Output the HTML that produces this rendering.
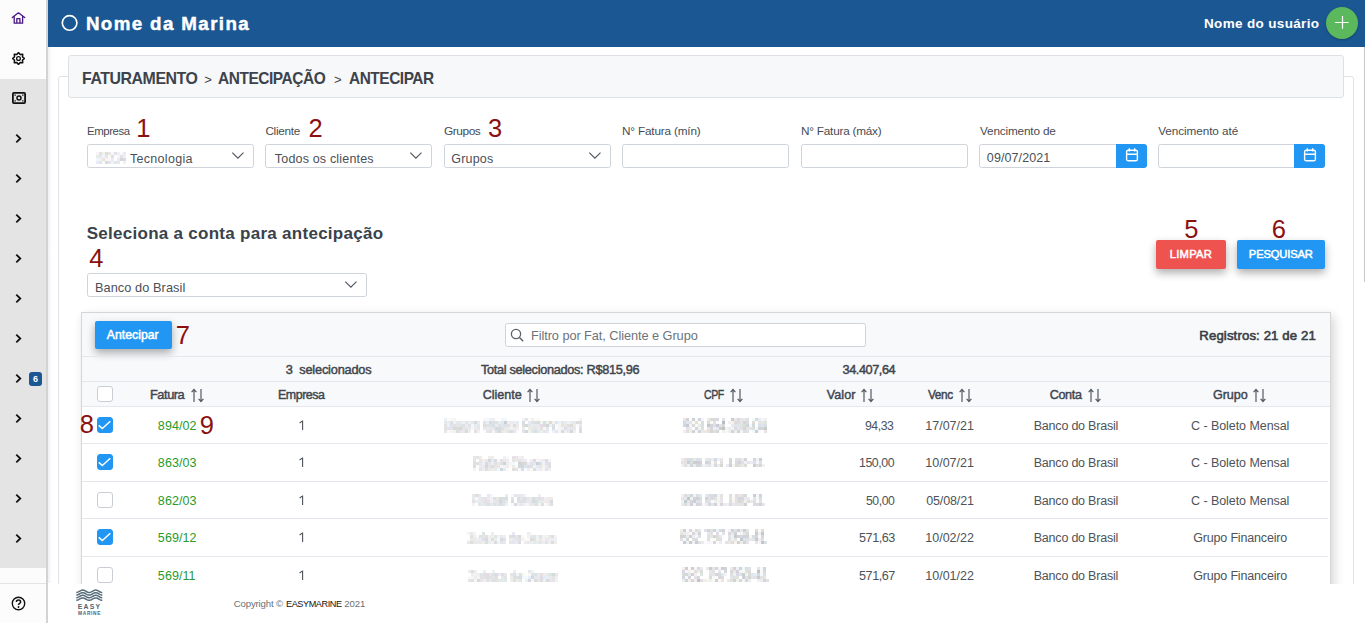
<!DOCTYPE html><html><head><meta charset="utf-8"><style>
*{box-sizing:border-box;margin:0;padding:0}
html,body{width:1365px;height:623px;overflow:hidden;background:#fff;font-family:"Liberation Sans",sans-serif;color:#333}
.a{position:absolute;white-space:nowrap}
.bl{display:inline-block;width:0;height:0}
.num{color:#8b1111}
.inp{position:absolute;height:24px;border:1px solid #ced4da;border-radius:2.5px;background:#fff}
.cal{position:absolute;background:#2196f3;border-radius:0 3px 3px 0}
.cb{position:absolute;width:16px;height:16px;border:1px solid #c9ced4;border-radius:3px;background:#fff}
.cbon{background:#2196f3;border-color:#2196f3}
.rl{position:absolute;height:1px;background:#e4e7eb}
.sb{-webkit-text-stroke:0.25px currentColor}
</style></head><body>
<div class="a" style="left:0;top:0;width:46px;height:623px;background:#fcfcfc"></div>
<div class="a" style="left:0;top:79px;width:46px;height:489px;background:#e4e4e4"></div>
<div class="a" style="left:46px;top:0;width:2px;height:623px;background:#d3d3d3"></div>
<div class="a" style="left:0;top:583px;width:46px;height:1px;background:#e4e4e4"></div>
<svg class="a" style="left:11px;top:11px" width="16" height="14" viewBox="0 0 16 14"><path d="M1.3 6.6 L7.4 1.8 L13.7 6.6 M3.2 5.4 V12.2 H11.6 V5.4 M5.8 12.2 V7.6 H8.9 V12.2" fill="none" stroke="#4a1688" stroke-width="1.3" stroke-linejoin="round" stroke-linecap="round"/></svg>
<svg class="a" style="left:12px;top:52px" width="13" height="13" viewBox="0 0 13 13"><path d="M6.50 0.50 L8.15 2.53 L10.74 2.26 L10.47 4.85 L12.50 6.50 L10.47 8.15 L10.74 10.74 L8.15 10.47 L6.50 12.50 L4.85 10.47 L2.26 10.74 L2.53 8.15 L0.50 6.50 L2.53 4.85 L2.26 2.26 L4.85 2.53 Z" fill="none" stroke="#111" stroke-width="1.5" stroke-linejoin="round"/><circle cx="6.5" cy="6.5" r="1.9" fill="none" stroke="#111" stroke-width="1.3"/></svg>
<svg class="a" style="left:12px;top:92px" width="14" height="12" viewBox="0 0 14 12"><rect x="0.9" y="0.9" width="12.2" height="10.2" rx="1" fill="none" stroke="#111" stroke-width="1.8"/><circle cx="7" cy="6" r="2" fill="none" stroke="#111" stroke-width="1.5"/><rect x="2.5" y="2.5" width="1.3" height="1.3" fill="#111"/><rect x="10.2" y="2.5" width="1.3" height="1.3" fill="#111"/><rect x="2.5" y="8.2" width="1.3" height="1.3" fill="#111"/><rect x="10.2" y="8.2" width="1.3" height="1.3" fill="#111"/></svg>
<svg class="a" style="left:14px;top:133px" width="9" height="11" viewBox="0 0 9 11"><path d="M2.3 1.6 L6.3 5.5 L2.3 9.4" fill="none" stroke="#111" stroke-width="1.8" stroke-linecap="butt" stroke-linejoin="miter"/></svg>
<svg class="a" style="left:14px;top:173px" width="9" height="11" viewBox="0 0 9 11"><path d="M2.3 1.6 L6.3 5.5 L2.3 9.4" fill="none" stroke="#111" stroke-width="1.8" stroke-linecap="butt" stroke-linejoin="miter"/></svg>
<svg class="a" style="left:14px;top:213px" width="9" height="11" viewBox="0 0 9 11"><path d="M2.3 1.6 L6.3 5.5 L2.3 9.4" fill="none" stroke="#111" stroke-width="1.8" stroke-linecap="butt" stroke-linejoin="miter"/></svg>
<svg class="a" style="left:14px;top:253px" width="9" height="11" viewBox="0 0 9 11"><path d="M2.3 1.6 L6.3 5.5 L2.3 9.4" fill="none" stroke="#111" stroke-width="1.8" stroke-linecap="butt" stroke-linejoin="miter"/></svg>
<svg class="a" style="left:14px;top:293px" width="9" height="11" viewBox="0 0 9 11"><path d="M2.3 1.6 L6.3 5.5 L2.3 9.4" fill="none" stroke="#111" stroke-width="1.8" stroke-linecap="butt" stroke-linejoin="miter"/></svg>
<svg class="a" style="left:14px;top:333px" width="9" height="11" viewBox="0 0 9 11"><path d="M2.3 1.6 L6.3 5.5 L2.3 9.4" fill="none" stroke="#111" stroke-width="1.8" stroke-linecap="butt" stroke-linejoin="miter"/></svg>
<svg class="a" style="left:14px;top:373px" width="9" height="11" viewBox="0 0 9 11"><path d="M2.3 1.6 L6.3 5.5 L2.3 9.4" fill="none" stroke="#111" stroke-width="1.8" stroke-linecap="butt" stroke-linejoin="miter"/></svg>
<svg class="a" style="left:14px;top:413px" width="9" height="11" viewBox="0 0 9 11"><path d="M2.3 1.6 L6.3 5.5 L2.3 9.4" fill="none" stroke="#111" stroke-width="1.8" stroke-linecap="butt" stroke-linejoin="miter"/></svg>
<svg class="a" style="left:14px;top:453px" width="9" height="11" viewBox="0 0 9 11"><path d="M2.3 1.6 L6.3 5.5 L2.3 9.4" fill="none" stroke="#111" stroke-width="1.8" stroke-linecap="butt" stroke-linejoin="miter"/></svg>
<svg class="a" style="left:14px;top:493px" width="9" height="11" viewBox="0 0 9 11"><path d="M2.3 1.6 L6.3 5.5 L2.3 9.4" fill="none" stroke="#111" stroke-width="1.8" stroke-linecap="butt" stroke-linejoin="miter"/></svg>
<svg class="a" style="left:14px;top:533px" width="9" height="11" viewBox="0 0 9 11"><path d="M2.3 1.6 L6.3 5.5 L2.3 9.4" fill="none" stroke="#111" stroke-width="1.8" stroke-linecap="butt" stroke-linejoin="miter"/></svg>
<div class="a" style="left:29px;top:372px;width:13px;height:14px;background:#1b5893;border-radius:3px;color:#fff;font-size:9px;font-weight:bold;text-align:center;line-height:14px">6</div>
<svg class="a" style="left:11px;top:596px" width="15" height="15" viewBox="0 0 15 15"><circle cx="7.5" cy="7.5" r="6.2" fill="none" stroke="#111" stroke-width="1.4"/><path d="M5.4 5.9 C5.4 3.3 9.6 3.3 9.6 5.9 C9.6 7.4 7.5 7.4 7.5 9" fill="none" stroke="#111" stroke-width="1.5"/><circle cx="7.5" cy="11" r="0.9" fill="#111"/></svg>
<div class="a" style="left:48px;top:0;width:1317px;height:47px;background:#1b5893"></div>
<svg class="a" style="left:60px;top:14px" width="20" height="20" viewBox="0 0 20 20"><circle cx="9.6" cy="8.9" r="7.3" fill="none" stroke="#fff" stroke-width="1.6"/></svg>
<div class="a" id="t_marina" style="left:85.88px;top:15.00px;font-size:18.75px;line-height:18.75px;letter-spacing:1.385px;font-weight:bold;color:#fff;-webkit-text-stroke:0.45px #fff">Nome da Marina<i class="bl"></i></div>
<div class="a" id="t_user" style="left:1203.99px;top:17.01px;font-size:13.50px;line-height:13.50px;letter-spacing:0.343px;font-weight:bold;color:#fff">Nome do usuário<i class="bl"></i></div>
<div class="a" style="left:1326px;top:7px;width:32px;height:32px;border-radius:50%;background:#5cb85c;box-shadow:0 1px 3px rgba(0,0,0,.25)"></div>
<svg class="a" style="left:1334px;top:15px" width="16" height="15" viewBox="0 0 16 15"><path d="M1.2 7.5 H14.6 M8.5 1.1 V13.8" stroke="#fff" stroke-width="1.2" fill="none"/></svg>
<div class="a" style="left:1364px;top:47px;width:1px;height:235px;background:#c9c9c9"></div>
<div class="a" style="left:48px;top:47px;width:4px;height:536px;background:linear-gradient(90deg,rgba(0,0,0,.06),rgba(0,0,0,0))"></div>
<div class="a" style="left:0;top:0;width:1363px;height:584px;overflow:hidden">
<div class="a" style="left:58px;top:76px;width:1296px;height:600px;border:1px solid #dfe3e8;border-radius:3px;background:#fff"></div>
<div class="a" style="left:68px;top:55px;width:1276px;height:43px;border:1px solid #dde1e6;border-radius:3px;background:#f7f8fa"></div>
<div class="a" id="bc1" style="left:82.06px;top:71.00px;font-size:15.75px;line-height:15.75px;letter-spacing:-0.450px;transform:scaleX(1.0101);transform-origin:0 0;font-weight:bold;color:#3d434b">FATURAMENTO<i class="bl"></i></div>
<div class="a" id="bc2" style="left:204.32px;top:72.51px;font-size:13.00px;line-height:13.00px;color:#3d434b">&gt;<i class="bl"></i></div>
<div class="a" id="bc3" style="left:218.46px;top:71.00px;font-size:15.75px;line-height:15.75px;letter-spacing:-0.450px;transform:scaleX(0.9811);transform-origin:0 0;font-weight:bold;color:#3d434b">ANTECIPAÇÃO<i class="bl"></i></div>
<div class="a" id="bc4" style="left:333.92px;top:72.51px;font-size:13.00px;line-height:13.00px;color:#3d434b">&gt;<i class="bl"></i></div>
<div class="a" id="bc5" style="left:349.06px;top:71.00px;font-size:15.75px;line-height:15.75px;letter-spacing:-0.450px;transform:scaleX(0.9774);transform-origin:0 0;font-weight:bold;color:#3d434b">ANTECIPAR<i class="bl"></i></div>
<div class="a" id="lb0" style="left:86.69px;top:125.01px;font-size:11.75px;line-height:11.75px;letter-spacing:-0.450px;transform:scaleX(0.9712);transform-origin:0 0;color:#474c52">Empresa<i class="bl"></i></div>
<div class="a" id="lb1" style="left:265.39px;top:125.01px;font-size:11.75px;line-height:11.75px;letter-spacing:-0.267px;color:#474c52">Cliente<i class="bl"></i></div>
<div class="a" id="lb2" style="left:444.30px;top:125.01px;font-size:11.75px;line-height:11.75px;letter-spacing:-0.450px;transform:scaleX(1.0127);transform-origin:0 0;color:#474c52">Grupos<i class="bl"></i></div>
<div class="a" id="lb3" style="left:621.99px;top:125.01px;font-size:11.75px;line-height:11.75px;letter-spacing:-0.171px;color:#474c52">N° Fatura (mín)<i class="bl"></i></div>
<div class="a" id="lb4" style="left:801.10px;top:125.01px;font-size:11.75px;line-height:11.75px;letter-spacing:-0.229px;color:#474c52">N° Fatura (máx)<i class="bl"></i></div>
<div class="a" id="lb5" style="left:980.10px;top:125.01px;font-size:11.75px;line-height:11.75px;letter-spacing:-0.167px;color:#474c52">Vencimento de<i class="bl"></i></div>
<div class="a" id="lb6" style="left:1158.19px;top:125.01px;font-size:11.75px;line-height:11.75px;letter-spacing:-0.077px;color:#474c52">Vencimento até<i class="bl"></i></div>
<div class="a" id="n1" style="left:136.37px;top:116.00px;font-size:25.50px;line-height:25.50px;color:#8b1111">1<i class="bl"></i></div>
<div class="a" id="n2" style="left:308.47px;top:115.50px;font-size:25.50px;line-height:25.50px;color:#8b1111">2<i class="bl"></i></div>
<div class="a" id="n3" style="left:487.97px;top:116.00px;font-size:25.50px;line-height:25.50px;color:#8b1111">3<i class="bl"></i></div>
<div class="inp" style="left:87px;top:144px;width:167px;height:24px"></div>
<div class="inp" style="left:265px;top:144px;width:167px;height:24px"></div>
<div class="inp" style="left:444px;top:144px;width:167px;height:24px"></div>
<div class="inp" style="left:622px;top:144px;width:167px;height:24px"></div>
<div class="inp" style="left:801px;top:144px;width:167px;height:24px"></div>
<div class="inp" style="left:979px;top:144px;width:167px;height:24px"></div>
<div class="inp" style="left:1158px;top:144px;width:167px;height:24px"></div>
<svg class="a" style="left:231.0px;top:151.0px" width="14" height="9" viewBox="0 0 14 9"><path d="M1.3 1.6 L6.9 7.2 L12.5 1.6" fill="none" stroke="#50565e" stroke-width="1.15"/></svg>
<svg class="a" style="left:409.0px;top:151.0px" width="14" height="9" viewBox="0 0 14 9"><path d="M1.3 1.6 L6.9 7.2 L12.5 1.6" fill="none" stroke="#50565e" stroke-width="1.15"/></svg>
<svg class="a" style="left:588.0px;top:151.0px" width="14" height="9" viewBox="0 0 14 9"><path d="M1.3 1.6 L6.9 7.2 L12.5 1.6" fill="none" stroke="#50565e" stroke-width="1.15"/></svg>
<div class="cal" style="left:1116px;top:144px;width:31px;height:24px"></div>
<svg class="a" style="left:1125px;top:147px" width="14" height="16" viewBox="0 0 14 16"><rect x="1.6" y="3.2" width="10.8" height="10.6" rx="1.6" fill="none" stroke="#fff" stroke-width="1.4"/><path d="M1.6 7.3 H12.4 M4.3 1.2 V4.6 M9.7 1.2 V4.6" stroke="#fff" stroke-width="1.4" fill="none"/></svg>
<div class="cal" style="left:1294px;top:144px;width:31px;height:24px"></div>
<svg class="a" style="left:1303px;top:147px" width="14" height="16" viewBox="0 0 14 16"><rect x="1.6" y="3.2" width="10.8" height="10.6" rx="1.6" fill="none" stroke="#fff" stroke-width="1.4"/><path d="M1.6 7.3 H12.4 M4.3 1.2 V4.6 M9.7 1.2 V4.6" stroke="#fff" stroke-width="1.4" fill="none"/></svg>
<svg class="a" style="left:96px;top:152px" width="30" height="12"><rect x="0" y="0" width="3" height="3" fill="#faf6f8"/><rect x="3" y="0" width="3" height="3" fill="#e1e4e3"/><rect x="6" y="0" width="3" height="3" fill="#f0f2f0"/><rect x="9" y="0" width="3" height="3" fill="#dededb"/><rect x="12" y="0" width="3" height="3" fill="#ebe5e7"/><rect x="15" y="0" width="3" height="3" fill="#f2fafe"/><rect x="18" y="0" width="3" height="3" fill="#e5e0e5"/><rect x="21" y="0" width="3" height="3" fill="#f2f2f2"/><rect x="24" y="0" width="3" height="3" fill="#fbfafb"/><rect x="27" y="0" width="3" height="3" fill="#eee8f2"/><rect x="0" y="3" width="3" height="3" fill="#e5ecea"/><rect x="3" y="3" width="3" height="3" fill="#e4eaf2"/><rect x="6" y="3" width="3" height="3" fill="#f4f4f8"/><rect x="9" y="3" width="3" height="3" fill="#e0e8ef"/><rect x="12" y="3" width="3" height="3" fill="#fafaf3"/><rect x="15" y="3" width="3" height="3" fill="#e1dee4"/><rect x="21" y="3" width="3" height="3" fill="#f8f6f2"/><rect x="24" y="3" width="3" height="3" fill="#e0e2e7"/><rect x="27" y="3" width="3" height="3" fill="#eff1f7"/><rect x="0" y="6" width="3" height="3" fill="#eff7fc"/><rect x="3" y="6" width="3" height="3" fill="#f4f1f5"/><rect x="6" y="6" width="3" height="3" fill="#e5e4e3"/><rect x="9" y="6" width="3" height="3" fill="#f9f4ef"/><rect x="12" y="6" width="3" height="3" fill="#fbf4f9"/><rect x="15" y="6" width="3" height="3" fill="#eeebf0"/><rect x="21" y="6" width="3" height="3" fill="#f0e9eb"/><rect x="24" y="6" width="3" height="3" fill="#d2d7de"/><rect x="27" y="6" width="3" height="3" fill="#dbdcd8"/><rect x="0" y="9" width="3" height="3" fill="#e9ecf5"/><rect x="3" y="9" width="3" height="3" fill="#dde6ee"/><rect x="6" y="9" width="3" height="3" fill="#fcfaf4"/><rect x="9" y="9" width="3" height="3" fill="#d3dce3"/><rect x="12" y="9" width="3" height="3" fill="#e4e5ea"/><rect x="15" y="9" width="3" height="3" fill="#f2f0f6"/><rect x="18" y="9" width="3" height="3" fill="#dee6e7"/><rect x="21" y="9" width="3" height="3" fill="#e1eaf0"/><rect x="27" y="9" width="3" height="3" fill="#f5eff1"/></svg>
<div class="a" id="s1" style="left:130.05px;top:152.50px;font-size:12.50px;line-height:12.50px;letter-spacing:0.289px;color:#4a5058">Tecnologia<i class="bl"></i></div>
<div class="a" id="s2" style="left:274.85px;top:152.50px;font-size:12.50px;line-height:12.50px;letter-spacing:0.175px;color:#4a5058">Todos os clientes<i class="bl"></i></div>
<div class="a" id="s3" style="left:451.35px;top:152.50px;font-size:12.50px;line-height:12.50px;letter-spacing:0.160px;color:#4a5058">Grupos<i class="bl"></i></div>
<div class="a" id="s4" style="left:986.85px;top:152.00px;font-size:12.50px;line-height:12.50px;letter-spacing:0.089px;color:#4a5058">09/07/2021<i class="bl"></i></div>
<div class="a" id="sec" style="left:86.68px;top:225.31px;font-size:17.00px;line-height:17.00px;letter-spacing:0.279px;font-weight:bold;color:#3a424b">Seleciona a conta para antecipação<i class="bl"></i></div>
<div class="a" id="n4" style="left:89.37px;top:246.01px;font-size:25.50px;line-height:25.50px;color:#8b1111">4<i class="bl"></i></div>
<div class="inp" style="left:87px;top:273px;width:280px;height:24px"></div>
<svg class="a" style="left:343.5px;top:280.0px" width="14" height="9" viewBox="0 0 14 9"><path d="M1.3 1.6 L6.9 7.2 L12.5 1.6" fill="none" stroke="#50565e" stroke-width="1.15"/></svg>
<div class="a" id="s5" style="left:94.94px;top:281.60px;font-size:12.75px;line-height:12.75px;letter-spacing:0.071px;color:#4a5058">Banco do Brasil<i class="bl"></i></div>
<div class="a" id="n5" style="left:1184.27px;top:216.80px;font-size:25.50px;line-height:25.50px;color:#8b1111">5<i class="bl"></i></div>
<div class="a" id="n6" style="left:1271.67px;top:216.80px;font-size:25.50px;line-height:25.50px;color:#8b1111">6<i class="bl"></i></div>
<div class="a" style="left:1156px;top:240px;width:70px;height:29px;background:#ef5350;border-radius:2px;box-shadow:0 4px 8px rgba(0,0,0,.32)"></div>
<div class="a" style="left:1237px;top:240px;width:88px;height:29px;background:#2196f3;border-radius:2px;box-shadow:0 4px 8px rgba(0,0,0,.32)"></div>
<div class="a" id="b1" style="left:1169.73px;top:249.01px;font-size:11.20px;line-height:11.20px;letter-spacing:0.280px;color:#fff;-webkit-text-stroke:0.5px #fff">LIMPAR<i class="bl"></i></div>
<div class="a" id="b2" style="left:1248.83px;top:249.01px;font-size:11.20px;line-height:11.20px;letter-spacing:-0.150px;color:#fff;-webkit-text-stroke:0.5px #fff">PESQUISAR<i class="bl"></i></div>
<div class="a" style="left:81px;top:312px;width:1250px;height:300px;border:1px solid #d5d6d8;background:#f8f9fa;box-shadow:3px 4px 10px rgba(0,0,0,.17)"></div>
<div class="a" style="left:82px;top:406px;width:1248px;height:200px;background:#fff"></div>
<div class="a" style="left:95px;top:321px;width:77px;height:28px;background:#2196f3;border-radius:2px;box-shadow:0 4px 8px rgba(0,0,0,.32)"></div>
<div class="a" id="b3" style="left:106.87px;top:328.91px;font-size:12.20px;line-height:12.20px;letter-spacing:0.025px;color:#fff;-webkit-text-stroke:0.5px #fff">Antecipar<i class="bl"></i></div>
<div class="a" id="n7" style="left:175.87px;top:323.01px;font-size:25.50px;line-height:25.50px;color:#8b1111">7<i class="bl"></i></div>
<div class="inp" style="left:505px;top:323px;width:361px;height:24px"></div>
<svg class="a" style="left:510px;top:328px" width="15" height="14" viewBox="0 0 15 14"><circle cx="6" cy="6" r="4.6" fill="none" stroke="#5a6068" stroke-width="1.3"/><path d="M9.4 9.4 L13.2 13.2" stroke="#5a6068" stroke-width="1.4"/></svg>
<div class="a" id="srch" style="left:530.93px;top:330.01px;font-size:12.75px;line-height:12.75px;letter-spacing:-0.060px;color:#6c737a">Filtro por Fat, Cliente e Grupo<i class="bl"></i></div>
<div class="a" id="reg" style="left:1199.31px;top:328.81px;font-size:13.20px;line-height:13.20px;letter-spacing:0.122px;color:#3a4047;-webkit-text-stroke:0.6px #3a4047">Registros: 21 de 21<i class="bl"></i></div>
<div class="rl" style="left:82px;top:356px;width:1248px"></div>
<div class="rl" style="left:82px;top:381px;width:1248px"></div>
<div class="rl" style="left:82px;top:406px;width:1248px"></div>
<div class="a" id="sm1" style="left:285.64px;top:364.01px;font-size:12.75px;line-height:12.75px;letter-spacing:-0.186px;color:#3f454c;-webkit-text-stroke:0.45px #3f454c">3&nbsp;&nbsp;selecionados<i class="bl"></i></div>
<div class="a" id="sm2" style="left:480.93px;top:363.81px;font-size:12.75px;line-height:12.75px;letter-spacing:-0.319px;color:#3f454c;-webkit-text-stroke:0.45px #3f454c">Total selecionados: R$815,96<i class="bl"></i></div>
<div class="a" id="sm3" style="left:842.54px;top:363.81px;font-size:12.75px;line-height:12.75px;letter-spacing:-0.450px;color:#3f454c;-webkit-text-stroke:0.45px #3f454c">34.407,64<i class="bl"></i></div>
<div class="a" id="h0" style="left:149.64px;top:388.91px;font-size:12.60px;line-height:12.60px;letter-spacing:-0.450px;transform:scaleX(1.0175);transform-origin:0 0;color:#3f4650;-webkit-text-stroke:0.45px #3f4650">Fatura<i class="bl"></i></div>
<svg class="a" style="left:190.5px;top:388px" width="14" height="15" viewBox="0 0 14 15"><path d="M3 14 V1.5 M0.6 4.2 L3 1.5 L5.4 4.2 M10 1 V13.5 M7.6 10.8 L10 13.5 L12.4 10.8" fill="none" stroke="#525a63" stroke-width="1.2"/></svg>
<div class="a" id="h1" style="left:278.44px;top:388.91px;font-size:12.60px;line-height:12.60px;letter-spacing:-0.450px;transform:scaleX(0.9849);transform-origin:0 0;color:#3f4650;-webkit-text-stroke:0.45px #3f4650">Empresa<i class="bl"></i></div>
<div class="a" id="h2" style="left:482.74px;top:388.91px;font-size:12.60px;line-height:12.60px;letter-spacing:-0.033px;color:#3f4650;-webkit-text-stroke:0.45px #3f4650">Cliente<i class="bl"></i></div>
<svg class="a" style="left:527.0px;top:388px" width="14" height="15" viewBox="0 0 14 15"><path d="M3 14 V1.5 M0.6 4.2 L3 1.5 L5.4 4.2 M10 1 V13.5 M7.6 10.8 L10 13.5 L12.4 10.8" fill="none" stroke="#525a63" stroke-width="1.2"/></svg>
<div class="a" id="h3" style="left:703.84px;top:388.91px;font-size:12.60px;line-height:12.60px;letter-spacing:-0.450px;transform:scaleX(0.8337);transform-origin:0 0;color:#3f4650;-webkit-text-stroke:0.45px #3f4650">CPF<i class="bl"></i></div>
<svg class="a" style="left:730.2px;top:388px" width="14" height="15" viewBox="0 0 14 15"><path d="M3 14 V1.5 M0.6 4.2 L3 1.5 L5.4 4.2 M10 1 V13.5 M7.6 10.8 L10 13.5 L12.4 10.8" fill="none" stroke="#525a63" stroke-width="1.2"/></svg>
<div class="a" id="h4" style="left:826.74px;top:388.91px;font-size:12.60px;line-height:12.60px;letter-spacing:0.050px;color:#3f4650;-webkit-text-stroke:0.45px #3f4650">Valor<i class="bl"></i></div>
<svg class="a" style="left:860.7px;top:388px" width="14" height="15" viewBox="0 0 14 15"><path d="M3 14 V1.5 M0.6 4.2 L3 1.5 L5.4 4.2 M10 1 V13.5 M7.6 10.8 L10 13.5 L12.4 10.8" fill="none" stroke="#525a63" stroke-width="1.2"/></svg>
<div class="a" id="h5" style="left:927.74px;top:388.91px;font-size:12.60px;line-height:12.60px;letter-spacing:-0.450px;transform:scaleX(0.9399);transform-origin:0 0;color:#3f4650;-webkit-text-stroke:0.45px #3f4650">Venc<i class="bl"></i></div>
<svg class="a" style="left:958.8px;top:388px" width="14" height="15" viewBox="0 0 14 15"><path d="M3 14 V1.5 M0.6 4.2 L3 1.5 L5.4 4.2 M10 1 V13.5 M7.6 10.8 L10 13.5 L12.4 10.8" fill="none" stroke="#525a63" stroke-width="1.2"/></svg>
<div class="a" id="h6" style="left:1049.64px;top:388.91px;font-size:12.60px;line-height:12.60px;letter-spacing:-0.300px;color:#3f4650;-webkit-text-stroke:0.45px #3f4650">Conta<i class="bl"></i></div>
<svg class="a" style="left:1088.1px;top:388px" width="14" height="15" viewBox="0 0 14 15"><path d="M3 14 V1.5 M0.6 4.2 L3 1.5 L5.4 4.2 M10 1 V13.5 M7.6 10.8 L10 13.5 L12.4 10.8" fill="none" stroke="#525a63" stroke-width="1.2"/></svg>
<div class="a" id="h7" style="left:1212.94px;top:388.91px;font-size:12.60px;line-height:12.60px;letter-spacing:-0.050px;color:#3f4650;-webkit-text-stroke:0.45px #3f4650">Grupo<i class="bl"></i></div>
<svg class="a" style="left:1253.4px;top:388px" width="14" height="15" viewBox="0 0 14 15"><path d="M3 14 V1.5 M0.6 4.2 L3 1.5 L5.4 4.2 M10 1 V13.5 M7.6 10.8 L10 13.5 L12.4 10.8" fill="none" stroke="#525a63" stroke-width="1.2"/></svg>
<div class="cb" style="left:97px;top:386px"></div>
<div class="cb cbon" style="left:97px;top:417px"></div>
<svg class="a" style="left:97px;top:417px" width="16" height="16" viewBox="0 0 16 16"><path d="M1.8 8.4 L5.3 11.6 L13.3 4.3" fill="none" stroke="#fff" stroke-width="1.5"/></svg>
<div class="a" id="r0f" style="left:157.85px;top:420.00px;font-size:12.50px;line-height:12.50px;letter-spacing:0.080px;color:#2a9a2a">894/02<i class="bl"></i></div>
<svg class="a" style="left:298px;top:420px" width="8" height="11" viewBox="0 0 8 11"><path d="M4.6 0.4 V10 M4.6 0.9 L1.6 3" fill="none" stroke="#4d5359" stroke-width="1.1"/></svg>
<svg class="a" style="left:444px;top:418px" width="138" height="15"><rect x="0" y="0" width="3" height="3" fill="#eaf2f5"/><rect x="3" y="0" width="3" height="3" fill="#fbfaf3"/><rect x="6" y="0" width="3" height="3" fill="#f6fafc"/><rect x="9" y="0" width="3" height="3" fill="#f9f6f0"/><rect x="39" y="0" width="3" height="3" fill="#fbf6fc"/><rect x="42" y="0" width="3" height="3" fill="#f4f7fe"/><rect x="45" y="0" width="3" height="3" fill="#eef3f2"/><rect x="48" y="0" width="3" height="3" fill="#ecedee"/><rect x="57" y="0" width="3" height="3" fill="#f6f3f9"/><rect x="60" y="0" width="3" height="3" fill="#f2faff"/><rect x="78" y="0" width="3" height="3" fill="#f4eef6"/><rect x="81" y="0" width="3" height="3" fill="#dfe6e6"/><rect x="84" y="0" width="3" height="3" fill="#fbfaf6"/><rect x="87" y="0" width="3" height="3" fill="#f1f0f5"/><rect x="90" y="0" width="3" height="3" fill="#fffaf4"/><rect x="93" y="0" width="3" height="3" fill="#f4fafa"/><rect x="135" y="0" width="3" height="3" fill="#f3f4fa"/><rect x="0" y="3" width="3" height="3" fill="#e8e9ef"/><rect x="3" y="3" width="3" height="3" fill="#efecf4"/><rect x="6" y="3" width="3" height="3" fill="#dae1e3"/><rect x="9" y="3" width="3" height="3" fill="#f6f0ec"/><rect x="12" y="3" width="3" height="3" fill="#e1e9f1"/><rect x="15" y="3" width="3" height="3" fill="#e6eaef"/><rect x="18" y="3" width="3" height="3" fill="#f2eff5"/><rect x="21" y="3" width="3" height="3" fill="#dee7eb"/><rect x="24" y="3" width="3" height="3" fill="#ebeeef"/><rect x="27" y="3" width="3" height="3" fill="#e4eaf0"/><rect x="30" y="3" width="3" height="3" fill="#d3dae1"/><rect x="33" y="3" width="3" height="3" fill="#ecedeb"/><rect x="39" y="3" width="3" height="3" fill="#e4e2df"/><rect x="42" y="3" width="3" height="3" fill="#e8f0f7"/><rect x="45" y="3" width="3" height="3" fill="#d5deda"/><rect x="48" y="3" width="3" height="3" fill="#dee1e5"/><rect x="51" y="3" width="3" height="3" fill="#dce2e4"/><rect x="54" y="3" width="3" height="3" fill="#e7eef2"/><rect x="57" y="3" width="3" height="3" fill="#e7e7ee"/><rect x="60" y="3" width="3" height="3" fill="#c8d0d2"/><rect x="63" y="3" width="3" height="3" fill="#eff0ea"/><rect x="66" y="3" width="3" height="3" fill="#efe9ef"/><rect x="69" y="3" width="3" height="3" fill="#e9f0ef"/><rect x="72" y="3" width="3" height="3" fill="#e4ecf4"/><rect x="78" y="3" width="3" height="3" fill="#d8e0e1"/><rect x="84" y="3" width="3" height="3" fill="#e6ebf3"/><rect x="87" y="3" width="3" height="3" fill="#dce5e0"/><rect x="90" y="3" width="3" height="3" fill="#dbe1e0"/><rect x="93" y="3" width="3" height="3" fill="#dfdadd"/><rect x="96" y="3" width="3" height="3" fill="#f2f6f2"/><rect x="99" y="3" width="3" height="3" fill="#d8e1de"/><rect x="102" y="3" width="3" height="3" fill="#eaf1ef"/><rect x="105" y="3" width="3" height="3" fill="#d9ddd8"/><rect x="108" y="3" width="3" height="3" fill="#f6f1ec"/><rect x="111" y="3" width="3" height="3" fill="#dee7f1"/><rect x="114" y="3" width="3" height="3" fill="#edf2f8"/><rect x="117" y="3" width="3" height="3" fill="#e2e9e8"/><rect x="120" y="3" width="3" height="3" fill="#ecebe6"/><rect x="123" y="3" width="3" height="3" fill="#ecf3fb"/><rect x="126" y="3" width="3" height="3" fill="#e5edee"/><rect x="129" y="3" width="3" height="3" fill="#e5e9ea"/><rect x="132" y="3" width="3" height="3" fill="#d7dfdf"/><rect x="135" y="3" width="3" height="3" fill="#e3dcdb"/><rect x="0" y="6" width="3" height="3" fill="#e2e4df"/><rect x="3" y="6" width="3" height="3" fill="#eeeff8"/><rect x="6" y="6" width="3" height="3" fill="#e0e4e8"/><rect x="9" y="6" width="3" height="3" fill="#dce4e4"/><rect x="12" y="6" width="3" height="3" fill="#e8e3e5"/><rect x="15" y="6" width="3" height="3" fill="#dfe6ea"/><rect x="18" y="6" width="3" height="3" fill="#dbdfe6"/><rect x="21" y="6" width="3" height="3" fill="#efebe8"/><rect x="24" y="6" width="3" height="3" fill="#e3dee8"/><rect x="27" y="6" width="3" height="3" fill="#f1f8f7"/><rect x="30" y="6" width="3" height="3" fill="#e9ebe9"/><rect x="33" y="6" width="3" height="3" fill="#e1e8ef"/><rect x="39" y="6" width="3" height="3" fill="#e2dce1"/><rect x="42" y="6" width="3" height="3" fill="#dee4e3"/><rect x="45" y="6" width="3" height="3" fill="#dce3e6"/><rect x="48" y="6" width="3" height="3" fill="#d7dee6"/><rect x="51" y="6" width="3" height="3" fill="#e5eef0"/><rect x="54" y="6" width="3" height="3" fill="#e3e1eb"/><rect x="57" y="6" width="3" height="3" fill="#e0e6f0"/><rect x="60" y="6" width="3" height="3" fill="#dfe0e4"/><rect x="63" y="6" width="3" height="3" fill="#dee2eb"/><rect x="66" y="6" width="3" height="3" fill="#f3edec"/><rect x="69" y="6" width="3" height="3" fill="#d9dede"/><rect x="72" y="6" width="3" height="3" fill="#ebebeb"/><rect x="78" y="6" width="3" height="3" fill="#dedbe2"/><rect x="81" y="6" width="3" height="3" fill="#d3dbd7"/><rect x="84" y="6" width="3" height="3" fill="#e3e8eb"/><rect x="87" y="6" width="3" height="3" fill="#ebece6"/><rect x="90" y="6" width="3" height="3" fill="#e6eaf0"/><rect x="93" y="6" width="3" height="3" fill="#e5e9eb"/><rect x="96" y="6" width="3" height="3" fill="#e2dee1"/><rect x="99" y="6" width="3" height="3" fill="#dadee1"/><rect x="102" y="6" width="3" height="3" fill="#d5d5d8"/><rect x="105" y="6" width="3" height="3" fill="#eff3ed"/><rect x="108" y="6" width="3" height="3" fill="#dadfea"/><rect x="111" y="6" width="3" height="3" fill="#f9f9f9"/><rect x="114" y="6" width="3" height="3" fill="#f9f4f0"/><rect x="117" y="6" width="3" height="3" fill="#e5e5e2"/><rect x="120" y="6" width="3" height="3" fill="#ebe6e8"/><rect x="123" y="6" width="3" height="3" fill="#e4e1dd"/><rect x="126" y="6" width="3" height="3" fill="#dcddda"/><rect x="129" y="6" width="3" height="3" fill="#efe9e7"/><rect x="132" y="6" width="3" height="3" fill="#f8fafe"/><rect x="135" y="6" width="3" height="3" fill="#ece5ea"/><rect x="0" y="9" width="3" height="3" fill="#e2e2e9"/><rect x="3" y="9" width="3" height="3" fill="#e2e4ed"/><rect x="6" y="9" width="3" height="3" fill="#e5e4e9"/><rect x="9" y="9" width="3" height="3" fill="#dbd9df"/><rect x="12" y="9" width="3" height="3" fill="#d6dedd"/><rect x="15" y="9" width="3" height="3" fill="#d3dad6"/><rect x="18" y="9" width="3" height="3" fill="#e8e2e2"/><rect x="21" y="9" width="3" height="3" fill="#e0e6ed"/><rect x="24" y="9" width="3" height="3" fill="#e9ebe8"/><rect x="27" y="9" width="3" height="3" fill="#f4f7f7"/><rect x="30" y="9" width="3" height="3" fill="#eaeaf4"/><rect x="33" y="9" width="3" height="3" fill="#e5e8e7"/><rect x="39" y="9" width="3" height="3" fill="#e7eae8"/><rect x="42" y="9" width="3" height="3" fill="#ebe8ef"/><rect x="45" y="9" width="3" height="3" fill="#e9e7e4"/><rect x="48" y="9" width="3" height="3" fill="#e2e9e7"/><rect x="51" y="9" width="3" height="3" fill="#d4dadb"/><rect x="54" y="9" width="3" height="3" fill="#d5dddd"/><rect x="57" y="9" width="3" height="3" fill="#e2e1df"/><rect x="60" y="9" width="3" height="3" fill="#e7ebed"/><rect x="63" y="9" width="3" height="3" fill="#efeaf2"/><rect x="66" y="9" width="3" height="3" fill="#f3f3ee"/><rect x="69" y="9" width="3" height="3" fill="#edebed"/><rect x="72" y="9" width="3" height="3" fill="#f5eef1"/><rect x="78" y="9" width="3" height="3" fill="#e4ede7"/><rect x="84" y="9" width="3" height="3" fill="#efe9e4"/><rect x="87" y="9" width="3" height="3" fill="#e6e9ed"/><rect x="90" y="9" width="3" height="3" fill="#e5e4e0"/><rect x="93" y="9" width="3" height="3" fill="#eaede8"/><rect x="96" y="9" width="3" height="3" fill="#e4dee4"/><rect x="99" y="9" width="3" height="3" fill="#f9f5ef"/><rect x="102" y="9" width="3" height="3" fill="#e0e9f1"/><rect x="108" y="9" width="3" height="3" fill="#d6dfe5"/><rect x="111" y="9" width="3" height="3" fill="#fdfaff"/><rect x="114" y="9" width="3" height="3" fill="#faf3ed"/><rect x="117" y="9" width="3" height="3" fill="#f5f0f3"/><rect x="120" y="9" width="3" height="3" fill="#dae0ea"/><rect x="123" y="9" width="3" height="3" fill="#eae9e7"/><rect x="126" y="9" width="3" height="3" fill="#e1e7ed"/><rect x="129" y="9" width="3" height="3" fill="#ece6ea"/><rect x="135" y="9" width="3" height="3" fill="#d9dfea"/><rect x="0" y="12" width="3" height="3" fill="#e7e7ea"/><rect x="3" y="12" width="3" height="3" fill="#fdf6fe"/><rect x="6" y="12" width="3" height="3" fill="#f3f4ed"/><rect x="9" y="12" width="3" height="3" fill="#f6f3ef"/><rect x="12" y="12" width="3" height="3" fill="#dcdde4"/><rect x="15" y="12" width="3" height="3" fill="#e8e4eb"/><rect x="18" y="12" width="3" height="3" fill="#ece5ea"/><rect x="21" y="12" width="3" height="3" fill="#d5dce0"/><rect x="24" y="12" width="3" height="3" fill="#f1edeb"/><rect x="30" y="12" width="3" height="3" fill="#e4dfdc"/><rect x="33" y="12" width="3" height="3" fill="#f0f2f1"/><rect x="39" y="12" width="3" height="3" fill="#fcfaff"/><rect x="42" y="12" width="3" height="3" fill="#e2e7eb"/><rect x="45" y="12" width="3" height="3" fill="#dfe6e1"/><rect x="48" y="12" width="3" height="3" fill="#f6f3f9"/><rect x="51" y="12" width="3" height="3" fill="#dce5e0"/><rect x="54" y="12" width="3" height="3" fill="#d5d8e0"/><rect x="57" y="12" width="3" height="3" fill="#eae8e3"/><rect x="60" y="12" width="3" height="3" fill="#efebe7"/><rect x="63" y="12" width="3" height="3" fill="#dee4e3"/><rect x="66" y="12" width="3" height="3" fill="#dcdbe2"/><rect x="69" y="12" width="3" height="3" fill="#e2e9f1"/><rect x="72" y="12" width="3" height="3" fill="#fffafe"/><rect x="78" y="12" width="3" height="3" fill="#e3e1e9"/><rect x="81" y="12" width="3" height="3" fill="#d3d6dd"/><rect x="84" y="12" width="3" height="3" fill="#edf5ef"/><rect x="87" y="12" width="3" height="3" fill="#e3e5e7"/><rect x="90" y="12" width="3" height="3" fill="#d9dfe7"/><rect x="93" y="12" width="3" height="3" fill="#e6e8f0"/><rect x="96" y="12" width="3" height="3" fill="#eaf2eb"/><rect x="99" y="12" width="3" height="3" fill="#eae5ea"/><rect x="102" y="12" width="3" height="3" fill="#e4e9f2"/><rect x="108" y="12" width="3" height="3" fill="#edf1f5"/><rect x="111" y="12" width="3" height="3" fill="#e2e7ef"/><rect x="114" y="12" width="3" height="3" fill="#f2f8ff"/><rect x="117" y="12" width="3" height="3" fill="#dadbdb"/><rect x="120" y="12" width="3" height="3" fill="#f0eef2"/><rect x="123" y="12" width="3" height="3" fill="#eae6ee"/><rect x="126" y="12" width="3" height="3" fill="#d4d8d4"/><rect x="129" y="12" width="3" height="3" fill="#eef1f3"/><rect x="135" y="12" width="3" height="3" fill="#dadce3"/></svg>
<svg class="a" style="left:683px;top:418px" width="84" height="15"><rect x="0" y="0" width="3" height="3" fill="#ece7e6"/><rect x="3" y="0" width="3" height="3" fill="#d7d1d1"/><rect x="6" y="0" width="3" height="3" fill="#fffaf9"/><rect x="9" y="0" width="3" height="3" fill="#c8d0dc"/><rect x="12" y="0" width="3" height="3" fill="#fffaf6"/><rect x="15" y="0" width="3" height="3" fill="#cbd4df"/><rect x="18" y="0" width="3" height="3" fill="#f8f3f8"/><rect x="24" y="0" width="3" height="3" fill="#ebe9e7"/><rect x="27" y="0" width="3" height="3" fill="#dbdad9"/><rect x="30" y="0" width="3" height="3" fill="#d5dade"/><rect x="33" y="0" width="3" height="3" fill="#d9dbe0"/><rect x="39" y="0" width="3" height="3" fill="#e4e2e5"/><rect x="48" y="0" width="3" height="3" fill="#cacdcc"/><rect x="51" y="0" width="3" height="3" fill="#eae8eb"/><rect x="54" y="0" width="3" height="3" fill="#dcdbe1"/><rect x="57" y="0" width="3" height="3" fill="#eae4e5"/><rect x="60" y="0" width="3" height="3" fill="#e3e8f0"/><rect x="63" y="0" width="3" height="3" fill="#dce3e4"/><rect x="69" y="0" width="3" height="3" fill="#f4faf4"/><rect x="72" y="0" width="3" height="3" fill="#d2dae5"/><rect x="75" y="0" width="3" height="3" fill="#ebedf1"/><rect x="78" y="0" width="3" height="3" fill="#f4f8fe"/><rect x="81" y="0" width="3" height="3" fill="#efefef"/><rect x="0" y="3" width="3" height="3" fill="#d3dce4"/><rect x="3" y="3" width="3" height="3" fill="#e1e5ef"/><rect x="6" y="3" width="3" height="3" fill="#e3e4ed"/><rect x="9" y="3" width="3" height="3" fill="#fafaf2"/><rect x="12" y="3" width="3" height="3" fill="#e4e0dc"/><rect x="15" y="3" width="3" height="3" fill="#fcf8f6"/><rect x="18" y="3" width="3" height="3" fill="#d5dfdc"/><rect x="24" y="3" width="3" height="3" fill="#dadfdb"/><rect x="27" y="3" width="3" height="3" fill="#f7f9f4"/><rect x="30" y="3" width="3" height="3" fill="#e5e0e2"/><rect x="33" y="3" width="3" height="3" fill="#fcfafb"/><rect x="39" y="3" width="3" height="3" fill="#b3bdc6"/><rect x="45" y="3" width="3" height="3" fill="#f6efee"/><rect x="48" y="3" width="3" height="3" fill="#f8f2ee"/><rect x="51" y="3" width="3" height="3" fill="#dbdae1"/><rect x="54" y="3" width="3" height="3" fill="#e1dddf"/><rect x="57" y="3" width="3" height="3" fill="#e3e6e4"/><rect x="60" y="3" width="3" height="3" fill="#d3d5d6"/><rect x="63" y="3" width="3" height="3" fill="#dcded9"/><rect x="69" y="3" width="3" height="3" fill="#dedddb"/><rect x="72" y="3" width="3" height="3" fill="#fefafe"/><rect x="75" y="3" width="3" height="3" fill="#e6e4e3"/><rect x="78" y="3" width="3" height="3" fill="#e5e5e4"/><rect x="81" y="3" width="3" height="3" fill="#dee5e1"/><rect x="0" y="6" width="3" height="3" fill="#d2d7db"/><rect x="3" y="6" width="3" height="3" fill="#c4cbd4"/><rect x="6" y="6" width="3" height="3" fill="#f7f2f5"/><rect x="9" y="6" width="3" height="3" fill="#dcd7dd"/><rect x="12" y="6" width="3" height="3" fill="#f4faf4"/><rect x="15" y="6" width="3" height="3" fill="#e7ebea"/><rect x="18" y="6" width="3" height="3" fill="#dedbe0"/><rect x="24" y="6" width="3" height="3" fill="#c7c6ce"/><rect x="27" y="6" width="3" height="3" fill="#d0d6d9"/><rect x="30" y="6" width="3" height="3" fill="#d9e1e4"/><rect x="33" y="6" width="3" height="3" fill="#cbcbd3"/><rect x="36" y="6" width="3" height="3" fill="#e1e5e5"/><rect x="39" y="6" width="3" height="3" fill="#d6d7d7"/><rect x="48" y="6" width="3" height="3" fill="#e6e8f2"/><rect x="51" y="6" width="3" height="3" fill="#dfe3eb"/><rect x="54" y="6" width="3" height="3" fill="#e0e7e2"/><rect x="57" y="6" width="3" height="3" fill="#dde5e4"/><rect x="60" y="6" width="3" height="3" fill="#dddcd8"/><rect x="63" y="6" width="3" height="3" fill="#d0d5d9"/><rect x="66" y="6" width="3" height="3" fill="#f3faff"/><rect x="69" y="6" width="3" height="3" fill="#d2dad9"/><rect x="75" y="6" width="3" height="3" fill="#d9e1e8"/><rect x="78" y="6" width="3" height="3" fill="#e1e4eb"/><rect x="81" y="6" width="3" height="3" fill="#d9dde5"/><rect x="0" y="9" width="3" height="3" fill="#fcf6ff"/><rect x="3" y="9" width="3" height="3" fill="#e4e2ea"/><rect x="6" y="9" width="3" height="3" fill="#ede9ec"/><rect x="12" y="9" width="3" height="3" fill="#cfd8e0"/><rect x="15" y="9" width="3" height="3" fill="#f1f5ee"/><rect x="18" y="9" width="3" height="3" fill="#dae1e2"/><rect x="24" y="9" width="3" height="3" fill="#e9e4e6"/><rect x="27" y="9" width="3" height="3" fill="#d9d5da"/><rect x="30" y="9" width="3" height="3" fill="#ecf0f7"/><rect x="33" y="9" width="3" height="3" fill="#e8e8f2"/><rect x="36" y="9" width="3" height="3" fill="#cad0cf"/><rect x="39" y="9" width="3" height="3" fill="#c2c5c3"/><rect x="42" y="9" width="3" height="3" fill="#f6eff7"/><rect x="45" y="9" width="3" height="3" fill="#e9eeee"/><rect x="48" y="9" width="3" height="3" fill="#f4f1ee"/><rect x="51" y="9" width="3" height="3" fill="#dbd9e3"/><rect x="54" y="9" width="3" height="3" fill="#e9e3e4"/><rect x="57" y="9" width="3" height="3" fill="#e0e1e6"/><rect x="60" y="9" width="3" height="3" fill="#d6d5d7"/><rect x="63" y="9" width="3" height="3" fill="#e8e5e1"/><rect x="66" y="9" width="3" height="3" fill="#e0e5e6"/><rect x="69" y="9" width="3" height="3" fill="#d8e0e1"/><rect x="72" y="9" width="3" height="3" fill="#faf6ef"/><rect x="75" y="9" width="3" height="3" fill="#d4d1dd"/><rect x="78" y="9" width="3" height="3" fill="#d7d5d3"/><rect x="81" y="9" width="3" height="3" fill="#c4ccca"/><rect x="0" y="12" width="3" height="3" fill="#f4edf3"/><rect x="3" y="12" width="3" height="3" fill="#e3dfdb"/><rect x="6" y="12" width="3" height="3" fill="#eeede8"/><rect x="9" y="12" width="3" height="3" fill="#d1d5d5"/><rect x="12" y="12" width="3" height="3" fill="#f7f5ef"/><rect x="15" y="12" width="3" height="3" fill="#d0d4de"/><rect x="18" y="12" width="3" height="3" fill="#ede8e6"/><rect x="21" y="12" width="3" height="3" fill="#eee7e2"/><rect x="24" y="12" width="3" height="3" fill="#e9e3de"/><rect x="27" y="12" width="3" height="3" fill="#d4d7d6"/><rect x="30" y="12" width="3" height="3" fill="#e3dfdb"/><rect x="33" y="12" width="3" height="3" fill="#d3d9d9"/><rect x="39" y="12" width="3" height="3" fill="#f2eee8"/><rect x="42" y="12" width="3" height="3" fill="#f6f8f4"/><rect x="45" y="12" width="3" height="3" fill="#edeff5"/><rect x="48" y="12" width="3" height="3" fill="#d0d5d6"/><rect x="51" y="12" width="3" height="3" fill="#eceef1"/><rect x="54" y="12" width="3" height="3" fill="#ced7d5"/><rect x="57" y="12" width="3" height="3" fill="#f4f1f4"/><rect x="60" y="12" width="3" height="3" fill="#dfdee1"/><rect x="63" y="12" width="3" height="3" fill="#dce3e9"/><rect x="69" y="12" width="3" height="3" fill="#f1f9ff"/><rect x="72" y="12" width="3" height="3" fill="#c9cfd3"/><rect x="75" y="12" width="3" height="3" fill="#f3faff"/><rect x="81" y="12" width="3" height="3" fill="#e9e4e3"/></svg>
<div class="a" id="r0v" style="left:865.45px;top:420.00px;font-size:12.50px;line-height:12.50px;letter-spacing:-0.450px;transform:scaleX(0.9774);transform-origin:0 0;color:#4d5359">94,33<i class="bl"></i></div>
<div class="a" id="r0d" style="left:925.25px;top:420.00px;font-size:12.50px;line-height:12.50px;color:#4d5359">17/07/21<i class="bl"></i></div>
<div class="a" id="r0c" style="left:1033.75px;top:420.00px;font-size:12.50px;line-height:12.50px;letter-spacing:-0.214px;color:#4d5359">Banco do Brasil<i class="bl"></i></div>
<div class="a" id="r0g" style="left:1191.05px;top:420.00px;font-size:12.50px;line-height:12.50px;letter-spacing:-0.062px;color:#4d5359">C - Boleto Mensal<i class="bl"></i></div>
<div class="rl" style="left:82px;top:443px;width:1246px"></div>
<div class="cb cbon" style="left:97px;top:454px"></div>
<svg class="a" style="left:97px;top:454px" width="16" height="16" viewBox="0 0 16 16"><path d="M1.8 8.4 L5.3 11.6 L13.3 4.3" fill="none" stroke="#fff" stroke-width="1.5"/></svg>
<div class="a" id="r1f" style="left:157.85px;top:457.00px;font-size:12.50px;line-height:12.50px;letter-spacing:0.080px;color:#2a9a2a">863/03<i class="bl"></i></div>
<svg class="a" style="left:298px;top:457px" width="8" height="11" viewBox="0 0 8 11"><path d="M4.6 0.4 V10 M4.6 0.9 L1.6 3" fill="none" stroke="#4d5359" stroke-width="1.1"/></svg>
<svg class="a" style="left:473px;top:456px" width="78" height="15"><rect x="0" y="0" width="3" height="3" fill="#e2e7ed"/><rect x="3" y="0" width="3" height="3" fill="#e6e3e4"/><rect x="6" y="0" width="3" height="3" fill="#eeede9"/><rect x="15" y="0" width="3" height="3" fill="#f1edeb"/><rect x="18" y="0" width="3" height="3" fill="#e8f0ea"/><rect x="30" y="0" width="3" height="3" fill="#edf2f6"/><rect x="33" y="0" width="3" height="3" fill="#fafafc"/><rect x="39" y="0" width="3" height="3" fill="#e4e4e7"/><rect x="42" y="0" width="3" height="3" fill="#ebe4ec"/><rect x="45" y="0" width="3" height="3" fill="#f4f0f0"/><rect x="48" y="0" width="3" height="3" fill="#ededf0"/><rect x="63" y="0" width="3" height="3" fill="#fffaf9"/><rect x="0" y="3" width="3" height="3" fill="#e8e3e4"/><rect x="6" y="3" width="3" height="3" fill="#e6e6e4"/><rect x="9" y="3" width="3" height="3" fill="#f4ede9"/><rect x="12" y="3" width="3" height="3" fill="#eee7ee"/><rect x="15" y="3" width="3" height="3" fill="#d1d9da"/><rect x="18" y="3" width="3" height="3" fill="#eae8f0"/><rect x="21" y="3" width="3" height="3" fill="#dadbe2"/><rect x="24" y="3" width="3" height="3" fill="#fbf7f9"/><rect x="27" y="3" width="3" height="3" fill="#e3e4e1"/><rect x="30" y="3" width="3" height="3" fill="#eceae7"/><rect x="33" y="3" width="3" height="3" fill="#eee9f3"/><rect x="36" y="3" width="3" height="3" fill="#fffafd"/><rect x="39" y="3" width="3" height="3" fill="#eae4e2"/><rect x="42" y="3" width="3" height="3" fill="#e8ecef"/><rect x="45" y="3" width="3" height="3" fill="#e6e1e5"/><rect x="48" y="3" width="3" height="3" fill="#e7ede7"/><rect x="51" y="3" width="3" height="3" fill="#efebf4"/><rect x="54" y="3" width="3" height="3" fill="#fffafd"/><rect x="57" y="3" width="3" height="3" fill="#edeef3"/><rect x="60" y="3" width="3" height="3" fill="#dcdde0"/><rect x="63" y="3" width="3" height="3" fill="#f7f4f2"/><rect x="66" y="3" width="3" height="3" fill="#f0f1f0"/><rect x="69" y="3" width="3" height="3" fill="#f1ecf3"/><rect x="72" y="3" width="3" height="3" fill="#dcdee0"/><rect x="75" y="3" width="3" height="3" fill="#f9f4f4"/><rect x="0" y="6" width="3" height="3" fill="#e4dedd"/><rect x="3" y="6" width="3" height="3" fill="#e0dfe4"/><rect x="6" y="6" width="3" height="3" fill="#ece6e9"/><rect x="9" y="6" width="3" height="3" fill="#eaf2fa"/><rect x="12" y="6" width="3" height="3" fill="#d5dbe7"/><rect x="15" y="6" width="3" height="3" fill="#eae4e9"/><rect x="18" y="6" width="3" height="3" fill="#eaf0f7"/><rect x="21" y="6" width="3" height="3" fill="#dce3e1"/><rect x="24" y="6" width="3" height="3" fill="#ece7ee"/><rect x="27" y="6" width="3" height="3" fill="#dfe3e2"/><rect x="30" y="6" width="3" height="3" fill="#ccd3d4"/><rect x="33" y="6" width="3" height="3" fill="#ecf0ef"/><rect x="36" y="6" width="3" height="3" fill="#f2f6fa"/><rect x="39" y="6" width="3" height="3" fill="#f1f9fc"/><rect x="45" y="6" width="3" height="3" fill="#d2d3d2"/><rect x="48" y="6" width="3" height="3" fill="#d5d8d9"/><rect x="51" y="6" width="3" height="3" fill="#dcdade"/><rect x="54" y="6" width="3" height="3" fill="#eceff4"/><rect x="57" y="6" width="3" height="3" fill="#e4e1ec"/><rect x="60" y="6" width="3" height="3" fill="#e8e8e8"/><rect x="63" y="6" width="3" height="3" fill="#c9d2d8"/><rect x="66" y="6" width="3" height="3" fill="#d6dee7"/><rect x="69" y="6" width="3" height="3" fill="#edf3f8"/><rect x="72" y="6" width="3" height="3" fill="#dce3eb"/><rect x="75" y="6" width="3" height="3" fill="#e0dee6"/><rect x="0" y="9" width="3" height="3" fill="#dedfdc"/><rect x="3" y="9" width="3" height="3" fill="#fefafe"/><rect x="6" y="9" width="3" height="3" fill="#ede9f3"/><rect x="9" y="9" width="3" height="3" fill="#eee9ef"/><rect x="12" y="9" width="3" height="3" fill="#d6dae0"/><rect x="15" y="9" width="3" height="3" fill="#e8e4e4"/><rect x="18" y="9" width="3" height="3" fill="#d9dfe1"/><rect x="21" y="9" width="3" height="3" fill="#e8e4e2"/><rect x="24" y="9" width="3" height="3" fill="#ebe6e4"/><rect x="27" y="9" width="3" height="3" fill="#f2f5f7"/><rect x="30" y="9" width="3" height="3" fill="#edf3f7"/><rect x="33" y="9" width="3" height="3" fill="#f3ede9"/><rect x="36" y="9" width="3" height="3" fill="#fafaff"/><rect x="39" y="9" width="3" height="3" fill="#efece7"/><rect x="42" y="9" width="3" height="3" fill="#f2f9f6"/><rect x="45" y="9" width="3" height="3" fill="#d0d9d7"/><rect x="48" y="9" width="3" height="3" fill="#cfd8dc"/><rect x="51" y="9" width="3" height="3" fill="#dce5ee"/><rect x="54" y="9" width="3" height="3" fill="#d7dfea"/><rect x="57" y="9" width="3" height="3" fill="#e0e0e2"/><rect x="60" y="9" width="3" height="3" fill="#f1f4f3"/><rect x="63" y="9" width="3" height="3" fill="#e5e9f3"/><rect x="66" y="9" width="3" height="3" fill="#e9e6e6"/><rect x="69" y="9" width="3" height="3" fill="#f4f2f0"/><rect x="72" y="9" width="3" height="3" fill="#eee9e4"/><rect x="75" y="9" width="3" height="3" fill="#d8e0e0"/><rect x="0" y="12" width="3" height="3" fill="#f7f3fc"/><rect x="6" y="12" width="3" height="3" fill="#e3e4e5"/><rect x="9" y="12" width="3" height="3" fill="#f2ecee"/><rect x="12" y="12" width="3" height="3" fill="#dbdfe8"/><rect x="15" y="12" width="3" height="3" fill="#eee8e4"/><rect x="18" y="12" width="3" height="3" fill="#ecece9"/><rect x="21" y="12" width="3" height="3" fill="#e6ebec"/><rect x="24" y="12" width="3" height="3" fill="#eef6ff"/><rect x="27" y="12" width="3" height="3" fill="#d0d8e0"/><rect x="30" y="12" width="3" height="3" fill="#e7ecef"/><rect x="33" y="12" width="3" height="3" fill="#f9faf8"/><rect x="39" y="12" width="3" height="3" fill="#dde2df"/><rect x="42" y="12" width="3" height="3" fill="#e3e2e4"/><rect x="45" y="12" width="3" height="3" fill="#faf6f9"/><rect x="48" y="12" width="3" height="3" fill="#d8dfe8"/><rect x="51" y="12" width="3" height="3" fill="#f6faff"/><rect x="54" y="12" width="3" height="3" fill="#f3edec"/><rect x="57" y="12" width="3" height="3" fill="#f9f9f3"/><rect x="60" y="12" width="3" height="3" fill="#dadde6"/><rect x="63" y="12" width="3" height="3" fill="#ecf2f6"/><rect x="66" y="12" width="3" height="3" fill="#ececf1"/><rect x="69" y="12" width="3" height="3" fill="#f7f5fa"/><rect x="72" y="12" width="3" height="3" fill="#dfe5eb"/><rect x="75" y="12" width="3" height="3" fill="#f0ecf0"/></svg>
<svg class="a" style="left:681px;top:458px" width="84" height="9"><rect x="0" y="0" width="3" height="3" fill="#eeebf4"/><rect x="3" y="0" width="3" height="3" fill="#e4e0e4"/><rect x="6" y="0" width="3" height="3" fill="#d6dfdf"/><rect x="9" y="0" width="3" height="3" fill="#dbdedd"/><rect x="12" y="0" width="3" height="3" fill="#e6eaf0"/><rect x="15" y="0" width="3" height="3" fill="#d8e1ea"/><rect x="18" y="0" width="3" height="3" fill="#dce3e8"/><rect x="24" y="0" width="3" height="3" fill="#e9e9e6"/><rect x="27" y="0" width="3" height="3" fill="#e1e3ec"/><rect x="30" y="0" width="3" height="3" fill="#edecf4"/><rect x="33" y="0" width="3" height="3" fill="#d2dbdf"/><rect x="36" y="0" width="3" height="3" fill="#f1eef5"/><rect x="39" y="0" width="3" height="3" fill="#e8e7e6"/><rect x="48" y="0" width="3" height="3" fill="#d9d7d8"/><rect x="54" y="0" width="3" height="3" fill="#dce2e4"/><rect x="57" y="0" width="3" height="3" fill="#e1dddc"/><rect x="60" y="0" width="3" height="3" fill="#f1eae6"/><rect x="63" y="0" width="3" height="3" fill="#d3d3dd"/><rect x="72" y="0" width="3" height="3" fill="#cfd8de"/><rect x="75" y="0" width="3" height="3" fill="#eff2f8"/><rect x="78" y="0" width="3" height="3" fill="#c9d1d7"/><rect x="0" y="3" width="3" height="3" fill="#e4e3e7"/><rect x="3" y="3" width="3" height="3" fill="#e8e3e0"/><rect x="6" y="3" width="3" height="3" fill="#cdcfdc"/><rect x="9" y="3" width="3" height="3" fill="#d9dfdb"/><rect x="12" y="3" width="3" height="3" fill="#c8d1ce"/><rect x="15" y="3" width="3" height="3" fill="#d0ccd8"/><rect x="18" y="3" width="3" height="3" fill="#d5d1d2"/><rect x="24" y="3" width="3" height="3" fill="#ccd5dd"/><rect x="27" y="3" width="3" height="3" fill="#dad9dc"/><rect x="30" y="3" width="3" height="3" fill="#f6faf8"/><rect x="33" y="3" width="3" height="3" fill="#e4dfde"/><rect x="39" y="3" width="3" height="3" fill="#e5e1e2"/><rect x="48" y="3" width="3" height="3" fill="#d1dad7"/><rect x="54" y="3" width="3" height="3" fill="#ded9dd"/><rect x="57" y="3" width="3" height="3" fill="#d5d4dd"/><rect x="60" y="3" width="3" height="3" fill="#e2e1de"/><rect x="63" y="3" width="3" height="3" fill="#eef0f1"/><rect x="66" y="3" width="3" height="3" fill="#e5e6ee"/><rect x="69" y="3" width="3" height="3" fill="#ecebf3"/><rect x="72" y="3" width="3" height="3" fill="#e0e0e6"/><rect x="75" y="3" width="3" height="3" fill="#f3f7fd"/><rect x="78" y="3" width="3" height="3" fill="#dfe0e2"/><rect x="0" y="6" width="3" height="3" fill="#ecf3f0"/><rect x="3" y="6" width="3" height="3" fill="#dfe1de"/><rect x="6" y="6" width="3" height="3" fill="#f2edf1"/><rect x="9" y="6" width="3" height="3" fill="#cfd8da"/><rect x="12" y="6" width="3" height="3" fill="#efe8e8"/><rect x="15" y="6" width="3" height="3" fill="#d2d6de"/><rect x="18" y="6" width="3" height="3" fill="#d3dbde"/><rect x="21" y="6" width="3" height="3" fill="#f4f1f9"/><rect x="24" y="6" width="3" height="3" fill="#e7ece6"/><rect x="27" y="6" width="3" height="3" fill="#dde4e4"/><rect x="30" y="6" width="3" height="3" fill="#f5f3fb"/><rect x="33" y="6" width="3" height="3" fill="#dcd8dc"/><rect x="36" y="6" width="3" height="3" fill="#e6ecef"/><rect x="39" y="6" width="3" height="3" fill="#dcd6d3"/><rect x="42" y="6" width="3" height="3" fill="#fffaff"/><rect x="45" y="6" width="3" height="3" fill="#eaecf5"/><rect x="48" y="6" width="3" height="3" fill="#d5d0cd"/><rect x="51" y="6" width="3" height="3" fill="#f4f5f1"/><rect x="54" y="6" width="3" height="3" fill="#dedad6"/><rect x="57" y="6" width="3" height="3" fill="#e1dee2"/><rect x="60" y="6" width="3" height="3" fill="#e8eae4"/><rect x="63" y="6" width="3" height="3" fill="#dedbd7"/><rect x="72" y="6" width="3" height="3" fill="#cad0d3"/><rect x="75" y="6" width="3" height="3" fill="#e4e0e1"/><rect x="78" y="6" width="3" height="3" fill="#d7d7dc"/><rect x="81" y="6" width="3" height="3" fill="#eff5f1"/></svg>
<div class="a" id="r1v" style="left:858.75px;top:457.00px;font-size:12.50px;line-height:12.50px;letter-spacing:-0.450px;transform:scaleX(0.9887);transform-origin:0 0;color:#4d5359">150,00<i class="bl"></i></div>
<div class="a" id="r1d" style="left:925.25px;top:457.00px;font-size:12.50px;line-height:12.50px;color:#4d5359">10/07/21<i class="bl"></i></div>
<div class="a" id="r1c" style="left:1033.75px;top:457.00px;font-size:12.50px;line-height:12.50px;letter-spacing:-0.214px;color:#4d5359">Banco do Brasil<i class="bl"></i></div>
<div class="a" id="r1g" style="left:1191.05px;top:457.00px;font-size:12.50px;line-height:12.50px;letter-spacing:-0.062px;color:#4d5359">C - Boleto Mensal<i class="bl"></i></div>
<div class="rl" style="left:82px;top:481px;width:1246px"></div>
<div class="cb" style="left:97px;top:492px"></div>
<div class="a" id="r2f" style="left:157.85px;top:495.00px;font-size:12.50px;line-height:12.50px;letter-spacing:0.080px;color:#2a9a2a">862/03<i class="bl"></i></div>
<svg class="a" style="left:298px;top:495px" width="8" height="11" viewBox="0 0 8 11"><path d="M4.6 0.4 V10 M4.6 0.9 L1.6 3" fill="none" stroke="#4d5359" stroke-width="1.1"/></svg>
<svg class="a" style="left:472px;top:494px" width="81" height="12"><rect x="0" y="0" width="3" height="3" fill="#eee8e3"/><rect x="3" y="0" width="3" height="3" fill="#dadde1"/><rect x="6" y="0" width="3" height="3" fill="#eae5ed"/><rect x="15" y="0" width="3" height="3" fill="#e3ebf2"/><rect x="18" y="0" width="3" height="3" fill="#f2f5fd"/><rect x="33" y="0" width="3" height="3" fill="#e9ebee"/><rect x="39" y="0" width="3" height="3" fill="#f2fafa"/><rect x="42" y="0" width="3" height="3" fill="#e6e6e8"/><rect x="45" y="0" width="3" height="3" fill="#ede6ec"/><rect x="48" y="0" width="3" height="3" fill="#e7eaee"/><rect x="51" y="0" width="3" height="3" fill="#ebf2f4"/><rect x="66" y="0" width="3" height="3" fill="#f2eeef"/><rect x="0" y="3" width="3" height="3" fill="#e3e9ed"/><rect x="3" y="3" width="3" height="3" fill="#f7fafc"/><rect x="6" y="3" width="3" height="3" fill="#ebe8ee"/><rect x="9" y="3" width="3" height="3" fill="#e7e7e5"/><rect x="12" y="3" width="3" height="3" fill="#e3e2e6"/><rect x="15" y="3" width="3" height="3" fill="#efe9ea"/><rect x="18" y="3" width="3" height="3" fill="#f4eff8"/><rect x="21" y="3" width="3" height="3" fill="#d9e2de"/><rect x="24" y="3" width="3" height="3" fill="#e5e8e3"/><rect x="27" y="3" width="3" height="3" fill="#d9dcda"/><rect x="30" y="3" width="3" height="3" fill="#dbdee0"/><rect x="33" y="3" width="3" height="3" fill="#d7dedf"/><rect x="39" y="3" width="3" height="3" fill="#dfe6ef"/><rect x="45" y="3" width="3" height="3" fill="#dfdfdb"/><rect x="48" y="3" width="3" height="3" fill="#e2e8ef"/><rect x="51" y="3" width="3" height="3" fill="#dadfe1"/><rect x="54" y="3" width="3" height="3" fill="#e5e5e7"/><rect x="57" y="3" width="3" height="3" fill="#edece9"/><rect x="60" y="3" width="3" height="3" fill="#d7dedf"/><rect x="63" y="3" width="3" height="3" fill="#e2e5e8"/><rect x="66" y="3" width="3" height="3" fill="#e3e0e9"/><rect x="69" y="3" width="3" height="3" fill="#e6e2ea"/><rect x="72" y="3" width="3" height="3" fill="#f0edf3"/><rect x="75" y="3" width="3" height="3" fill="#efe8f1"/><rect x="78" y="3" width="3" height="3" fill="#efebe8"/><rect x="0" y="6" width="3" height="3" fill="#e6e0e6"/><rect x="3" y="6" width="3" height="3" fill="#e8eff1"/><rect x="6" y="6" width="3" height="3" fill="#e5ebf2"/><rect x="9" y="6" width="3" height="3" fill="#e9e8e4"/><rect x="12" y="6" width="3" height="3" fill="#e4e1e4"/><rect x="15" y="6" width="3" height="3" fill="#e6e3e6"/><rect x="18" y="6" width="3" height="3" fill="#f4eff7"/><rect x="21" y="6" width="3" height="3" fill="#e7e9e3"/><rect x="24" y="6" width="3" height="3" fill="#e8e4e1"/><rect x="27" y="6" width="3" height="3" fill="#cfd8e2"/><rect x="30" y="6" width="3" height="3" fill="#dce2ea"/><rect x="33" y="6" width="3" height="3" fill="#e6e8e7"/><rect x="39" y="6" width="3" height="3" fill="#dbdadd"/><rect x="45" y="6" width="3" height="3" fill="#dae2eb"/><rect x="48" y="6" width="3" height="3" fill="#dedfeb"/><rect x="51" y="6" width="3" height="3" fill="#dde1e1"/><rect x="54" y="6" width="3" height="3" fill="#e7e7f1"/><rect x="57" y="6" width="3" height="3" fill="#ebe6e2"/><rect x="60" y="6" width="3" height="3" fill="#d2dbde"/><rect x="63" y="6" width="3" height="3" fill="#dbe0e1"/><rect x="66" y="6" width="3" height="3" fill="#e3ebe9"/><rect x="69" y="6" width="3" height="3" fill="#e9ece9"/><rect x="72" y="6" width="3" height="3" fill="#eeebe9"/><rect x="75" y="6" width="3" height="3" fill="#ece9ed"/><rect x="78" y="6" width="3" height="3" fill="#d9dcde"/><rect x="0" y="9" width="3" height="3" fill="#f7f1ef"/><rect x="6" y="9" width="3" height="3" fill="#e4e6e6"/><rect x="9" y="9" width="3" height="3" fill="#e7eaf3"/><rect x="12" y="9" width="3" height="3" fill="#dfe6e5"/><rect x="15" y="9" width="3" height="3" fill="#dbe2e6"/><rect x="18" y="9" width="3" height="3" fill="#e4eaea"/><rect x="21" y="9" width="3" height="3" fill="#dce2e7"/><rect x="24" y="9" width="3" height="3" fill="#dfe6ec"/><rect x="27" y="9" width="3" height="3" fill="#dbdfdb"/><rect x="30" y="9" width="3" height="3" fill="#dee2ea"/><rect x="33" y="9" width="3" height="3" fill="#efefed"/><rect x="39" y="9" width="3" height="3" fill="#fdf8fe"/><rect x="42" y="9" width="3" height="3" fill="#d7dce3"/><rect x="45" y="9" width="3" height="3" fill="#f0edf2"/><rect x="48" y="9" width="3" height="3" fill="#e6e8e8"/><rect x="51" y="9" width="3" height="3" fill="#ebf3f6"/><rect x="54" y="9" width="3" height="3" fill="#f8f3f7"/><rect x="57" y="9" width="3" height="3" fill="#e8ece8"/><rect x="60" y="9" width="3" height="3" fill="#e9e7e7"/><rect x="63" y="9" width="3" height="3" fill="#e4dfdf"/><rect x="66" y="9" width="3" height="3" fill="#eff1fb"/><rect x="69" y="9" width="3" height="3" fill="#dbe3df"/><rect x="72" y="9" width="3" height="3" fill="#fbf7fb"/><rect x="75" y="9" width="3" height="3" fill="#ebefed"/><rect x="78" y="9" width="3" height="3" fill="#dde0e6"/></svg>
<svg class="a" style="left:681px;top:494px" width="84" height="12"><rect x="0" y="0" width="3" height="3" fill="#f2eff7"/><rect x="3" y="0" width="3" height="3" fill="#dfdbdf"/><rect x="6" y="0" width="3" height="3" fill="#dfe7e6"/><rect x="9" y="0" width="3" height="3" fill="#d1d5d4"/><rect x="12" y="0" width="3" height="3" fill="#eef2f7"/><rect x="15" y="0" width="3" height="3" fill="#d7e0e9"/><rect x="18" y="0" width="3" height="3" fill="#e1e7ec"/><rect x="24" y="0" width="3" height="3" fill="#e9e9e6"/><rect x="27" y="0" width="3" height="3" fill="#dbdee7"/><rect x="30" y="0" width="3" height="3" fill="#d9dae4"/><rect x="33" y="0" width="3" height="3" fill="#d2dbe0"/><rect x="36" y="0" width="3" height="3" fill="#f5f2f9"/><rect x="39" y="0" width="3" height="3" fill="#e3e2e1"/><rect x="48" y="0" width="3" height="3" fill="#e0dede"/><rect x="51" y="0" width="3" height="3" fill="#f5fafa"/><rect x="54" y="0" width="3" height="3" fill="#e2dedd"/><rect x="57" y="0" width="3" height="3" fill="#ece5e1"/><rect x="60" y="0" width="3" height="3" fill="#e0dfe8"/><rect x="63" y="0" width="3" height="3" fill="#d3dbe1"/><rect x="72" y="0" width="3" height="3" fill="#cacfd9"/><rect x="75" y="0" width="3" height="3" fill="#f2f8fa"/><rect x="78" y="0" width="3" height="3" fill="#d3d2d9"/><rect x="0" y="3" width="3" height="3" fill="#e9e4e0"/><rect x="3" y="3" width="3" height="3" fill="#e4e6f0"/><rect x="6" y="3" width="3" height="3" fill="#bfc6c5"/><rect x="9" y="3" width="3" height="3" fill="#edf4ed"/><rect x="12" y="3" width="3" height="3" fill="#d5d1dd"/><rect x="15" y="3" width="3" height="3" fill="#d1cecf"/><rect x="18" y="3" width="3" height="3" fill="#d4dde4"/><rect x="24" y="3" width="3" height="3" fill="#d3d2d6"/><rect x="27" y="3" width="3" height="3" fill="#dee3e4"/><rect x="30" y="3" width="3" height="3" fill="#dedada"/><rect x="33" y="3" width="3" height="3" fill="#e4e1e1"/><rect x="36" y="3" width="3" height="3" fill="#f0f8f2"/><rect x="39" y="3" width="3" height="3" fill="#e8e2e5"/><rect x="48" y="3" width="3" height="3" fill="#e2e0e7"/><rect x="51" y="3" width="3" height="3" fill="#faf8f3"/><rect x="54" y="3" width="3" height="3" fill="#dfe2e4"/><rect x="57" y="3" width="3" height="3" fill="#d3d5de"/><rect x="60" y="3" width="3" height="3" fill="#d8d7e1"/><rect x="63" y="3" width="3" height="3" fill="#eae9ef"/><rect x="66" y="3" width="3" height="3" fill="#e7ecf3"/><rect x="72" y="3" width="3" height="3" fill="#e5e5e7"/><rect x="75" y="3" width="3" height="3" fill="#f3faf6"/><rect x="78" y="3" width="3" height="3" fill="#dcdedc"/><rect x="0" y="6" width="3" height="3" fill="#f3eef2"/><rect x="3" y="6" width="3" height="3" fill="#c3cdd0"/><rect x="6" y="6" width="3" height="3" fill="#e9e3e3"/><rect x="9" y="6" width="3" height="3" fill="#d4d7e0"/><rect x="12" y="6" width="3" height="3" fill="#c7d0d4"/><rect x="15" y="6" width="3" height="3" fill="#e3e0ea"/><rect x="18" y="6" width="3" height="3" fill="#dde2de"/><rect x="24" y="6" width="3" height="3" fill="#dce3e3"/><rect x="27" y="6" width="3" height="3" fill="#e1dfe9"/><rect x="30" y="6" width="3" height="3" fill="#fffafa"/><rect x="33" y="6" width="3" height="3" fill="#e9eff2"/><rect x="36" y="6" width="3" height="3" fill="#f7f0eb"/><rect x="39" y="6" width="3" height="3" fill="#e9e5ee"/><rect x="48" y="6" width="3" height="3" fill="#dddfe9"/><rect x="51" y="6" width="3" height="3" fill="#f9f3ec"/><rect x="54" y="6" width="3" height="3" fill="#e0e2e0"/><rect x="57" y="6" width="3" height="3" fill="#dbd7d4"/><rect x="60" y="6" width="3" height="3" fill="#e0dde1"/><rect x="63" y="6" width="3" height="3" fill="#f1f1eb"/><rect x="66" y="6" width="3" height="3" fill="#e1ddd9"/><rect x="69" y="6" width="3" height="3" fill="#e4e9e9"/><rect x="72" y="6" width="3" height="3" fill="#e1ddde"/><rect x="75" y="6" width="3" height="3" fill="#fcfafc"/><rect x="78" y="6" width="3" height="3" fill="#dde4e2"/><rect x="0" y="9" width="3" height="3" fill="#ebe8f1"/><rect x="3" y="9" width="3" height="3" fill="#d9dfdd"/><rect x="6" y="9" width="3" height="3" fill="#ece8ee"/><rect x="9" y="9" width="3" height="3" fill="#d5d0cf"/><rect x="12" y="9" width="3" height="3" fill="#f4f4f7"/><rect x="15" y="9" width="3" height="3" fill="#cfd5de"/><rect x="18" y="9" width="3" height="3" fill="#d8dbe6"/><rect x="21" y="9" width="3" height="3" fill="#fcf5f7"/><rect x="24" y="9" width="3" height="3" fill="#eeebf1"/><rect x="27" y="9" width="3" height="3" fill="#d6d7e0"/><rect x="30" y="9" width="3" height="3" fill="#dfe6ea"/><rect x="33" y="9" width="3" height="3" fill="#d0d5d4"/><rect x="36" y="9" width="3" height="3" fill="#faf2f9"/><rect x="39" y="9" width="3" height="3" fill="#dcd6d9"/><rect x="42" y="9" width="3" height="3" fill="#eeebed"/><rect x="45" y="9" width="3" height="3" fill="#eeeff0"/><rect x="48" y="9" width="3" height="3" fill="#dddadf"/><rect x="51" y="9" width="3" height="3" fill="#e8e5ee"/><rect x="54" y="9" width="3" height="3" fill="#e4e5e3"/><rect x="57" y="9" width="3" height="3" fill="#e8e4ed"/><rect x="60" y="9" width="3" height="3" fill="#e0e4e4"/><rect x="63" y="9" width="3" height="3" fill="#d2d0d1"/><rect x="72" y="9" width="3" height="3" fill="#dcdbe1"/><rect x="75" y="9" width="3" height="3" fill="#dedada"/><rect x="78" y="9" width="3" height="3" fill="#ced5da"/><rect x="81" y="9" width="3" height="3" fill="#eae3ed"/></svg>
<div class="a" id="r2v" style="left:865.55px;top:495.00px;font-size:12.50px;line-height:12.50px;letter-spacing:-0.450px;transform:scaleX(0.9772);transform-origin:0 0;color:#4d5359">50,00<i class="bl"></i></div>
<div class="a" id="r2d" style="left:926.25px;top:495.00px;font-size:12.50px;line-height:12.50px;letter-spacing:-0.143px;color:#4d5359">05/08/21<i class="bl"></i></div>
<div class="a" id="r2c" style="left:1033.75px;top:495.00px;font-size:12.50px;line-height:12.50px;letter-spacing:-0.214px;color:#4d5359">Banco do Brasil<i class="bl"></i></div>
<div class="a" id="r2g" style="left:1191.05px;top:495.00px;font-size:12.50px;line-height:12.50px;letter-spacing:-0.062px;color:#4d5359">C - Boleto Mensal<i class="bl"></i></div>
<div class="rl" style="left:82px;top:518px;width:1246px"></div>
<div class="cb cbon" style="left:97px;top:529px"></div>
<svg class="a" style="left:97px;top:529px" width="16" height="16" viewBox="0 0 16 16"><path d="M1.8 8.4 L5.3 11.6 L13.3 4.3" fill="none" stroke="#fff" stroke-width="1.5"/></svg>
<div class="a" id="r3f" style="left:157.85px;top:532.00px;font-size:12.50px;line-height:12.50px;letter-spacing:0.080px;color:#2a9a2a">569/12<i class="bl"></i></div>
<svg class="a" style="left:298px;top:532px" width="8" height="11" viewBox="0 0 8 11"><path d="M4.6 0.4 V10 M4.6 0.9 L1.6 3" fill="none" stroke="#4d5359" stroke-width="1.1"/></svg>
<svg class="a" style="left:467px;top:532px" width="90" height="12"><rect x="0" y="0" width="3" height="3" fill="#f8f2f1"/><rect x="3" y="0" width="3" height="3" fill="#e6e9ed"/><rect x="6" y="0" width="3" height="3" fill="#f0f5f5"/><rect x="15" y="0" width="3" height="3" fill="#dde4e6"/><rect x="24" y="0" width="3" height="3" fill="#eeecf1"/><rect x="45" y="0" width="3" height="3" fill="#e7eaf4"/><rect x="60" y="0" width="3" height="3" fill="#e9efee"/><rect x="63" y="0" width="3" height="3" fill="#fbfafc"/><rect x="3" y="3" width="3" height="3" fill="#e4e1df"/><rect x="6" y="3" width="3" height="3" fill="#eceef3"/><rect x="9" y="3" width="3" height="3" fill="#f9f9f8"/><rect x="12" y="3" width="3" height="3" fill="#e2e2e1"/><rect x="15" y="3" width="3" height="3" fill="#e0e6ea"/><rect x="18" y="3" width="3" height="3" fill="#e4dfe6"/><rect x="21" y="3" width="3" height="3" fill="#f4f0ea"/><rect x="24" y="3" width="3" height="3" fill="#f1eef2"/><rect x="27" y="3" width="3" height="3" fill="#e0e7e9"/><rect x="30" y="3" width="3" height="3" fill="#f5f2f5"/><rect x="33" y="3" width="3" height="3" fill="#e8eaf0"/><rect x="36" y="3" width="3" height="3" fill="#f2ebf3"/><rect x="42" y="3" width="3" height="3" fill="#e1dde3"/><rect x="45" y="3" width="3" height="3" fill="#d9dee4"/><rect x="48" y="3" width="3" height="3" fill="#e1e6e8"/><rect x="51" y="3" width="3" height="3" fill="#ddd9d9"/><rect x="54" y="3" width="3" height="3" fill="#f6faf4"/><rect x="60" y="3" width="3" height="3" fill="#f0f5f0"/><rect x="63" y="3" width="3" height="3" fill="#e6e6ee"/><rect x="66" y="3" width="3" height="3" fill="#dee7e6"/><rect x="69" y="3" width="3" height="3" fill="#f0f1f3"/><rect x="72" y="3" width="3" height="3" fill="#e4e0e8"/><rect x="75" y="3" width="3" height="3" fill="#eef3f2"/><rect x="78" y="3" width="3" height="3" fill="#f1f5f2"/><rect x="81" y="3" width="3" height="3" fill="#e8eae8"/><rect x="84" y="3" width="3" height="3" fill="#e4dfdf"/><rect x="87" y="3" width="3" height="3" fill="#f8f2fb"/><rect x="0" y="6" width="3" height="3" fill="#fff9fd"/><rect x="3" y="6" width="3" height="3" fill="#ebeae9"/><rect x="6" y="6" width="3" height="3" fill="#ebeaf1"/><rect x="9" y="6" width="3" height="3" fill="#eaf0eb"/><rect x="12" y="6" width="3" height="3" fill="#e6edf4"/><rect x="15" y="6" width="3" height="3" fill="#dfe0e9"/><rect x="18" y="6" width="3" height="3" fill="#d4dde5"/><rect x="21" y="6" width="3" height="3" fill="#f2f1ee"/><rect x="24" y="6" width="3" height="3" fill="#dedfe2"/><rect x="27" y="6" width="3" height="3" fill="#edecec"/><rect x="30" y="6" width="3" height="3" fill="#f7fafd"/><rect x="33" y="6" width="3" height="3" fill="#d4dbe3"/><rect x="36" y="6" width="3" height="3" fill="#e1e2e0"/><rect x="42" y="6" width="3" height="3" fill="#f0ede9"/><rect x="45" y="6" width="3" height="3" fill="#eee8ea"/><rect x="48" y="6" width="3" height="3" fill="#e1e6ed"/><rect x="51" y="6" width="3" height="3" fill="#dfe2e3"/><rect x="54" y="6" width="3" height="3" fill="#f4f1f3"/><rect x="57" y="6" width="3" height="3" fill="#fefaf8"/><rect x="60" y="6" width="3" height="3" fill="#fafafd"/><rect x="63" y="6" width="3" height="3" fill="#dfdad7"/><rect x="66" y="6" width="3" height="3" fill="#e6e1e7"/><rect x="69" y="6" width="3" height="3" fill="#ecf4f2"/><rect x="72" y="6" width="3" height="3" fill="#e7e9eb"/><rect x="75" y="6" width="3" height="3" fill="#f6f0ef"/><rect x="78" y="6" width="3" height="3" fill="#e4eaef"/><rect x="81" y="6" width="3" height="3" fill="#f0eaf2"/><rect x="84" y="6" width="3" height="3" fill="#ecedf4"/><rect x="87" y="6" width="3" height="3" fill="#ebf2f3"/><rect x="0" y="9" width="3" height="3" fill="#eae9e8"/><rect x="3" y="9" width="3" height="3" fill="#dee0db"/><rect x="6" y="9" width="3" height="3" fill="#e9eae5"/><rect x="9" y="9" width="3" height="3" fill="#ece9f0"/><rect x="12" y="9" width="3" height="3" fill="#ede8eb"/><rect x="15" y="9" width="3" height="3" fill="#ecf0eb"/><rect x="18" y="9" width="3" height="3" fill="#dde0e2"/><rect x="21" y="9" width="3" height="3" fill="#e9efee"/><rect x="24" y="9" width="3" height="3" fill="#f8f1f2"/><rect x="27" y="9" width="3" height="3" fill="#d7dfdd"/><rect x="30" y="9" width="3" height="3" fill="#f5f0f0"/><rect x="33" y="9" width="3" height="3" fill="#e2e5ed"/><rect x="36" y="9" width="3" height="3" fill="#eae7ed"/><rect x="42" y="9" width="3" height="3" fill="#e3e9ea"/><rect x="45" y="9" width="3" height="3" fill="#e0e7f0"/><rect x="48" y="9" width="3" height="3" fill="#edebeb"/><rect x="51" y="9" width="3" height="3" fill="#dddce2"/><rect x="57" y="9" width="3" height="3" fill="#ededf0"/><rect x="60" y="9" width="3" height="3" fill="#ece7ec"/><rect x="63" y="9" width="3" height="3" fill="#edf1eb"/><rect x="66" y="9" width="3" height="3" fill="#e3eae8"/><rect x="69" y="9" width="3" height="3" fill="#e8ecf1"/><rect x="72" y="9" width="3" height="3" fill="#e3e6e4"/><rect x="75" y="9" width="3" height="3" fill="#ececf2"/><rect x="78" y="9" width="3" height="3" fill="#e7e3e2"/><rect x="81" y="9" width="3" height="3" fill="#f0eef3"/><rect x="84" y="9" width="3" height="3" fill="#dce0e1"/><rect x="87" y="9" width="3" height="3" fill="#f1eded"/></svg>
<svg class="a" style="left:680px;top:529px" width="87" height="15"><rect x="0" y="0" width="3" height="3" fill="#f0ede7"/><rect x="3" y="0" width="3" height="3" fill="#d1d0d3"/><rect x="6" y="0" width="3" height="3" fill="#fbfaff"/><rect x="9" y="0" width="3" height="3" fill="#dbd6e1"/><rect x="12" y="0" width="3" height="3" fill="#f9f5f3"/><rect x="15" y="0" width="3" height="3" fill="#dddcdd"/><rect x="18" y="0" width="3" height="3" fill="#e0e7e8"/><rect x="24" y="0" width="3" height="3" fill="#dfe2ec"/><rect x="27" y="0" width="3" height="3" fill="#d7d3d1"/><rect x="30" y="0" width="3" height="3" fill="#dfe0e6"/><rect x="33" y="0" width="3" height="3" fill="#d1d6d7"/><rect x="36" y="0" width="3" height="3" fill="#ecf3f6"/><rect x="39" y="0" width="3" height="3" fill="#d8d9d9"/><rect x="42" y="0" width="3" height="3" fill="#d0d4df"/><rect x="48" y="0" width="3" height="3" fill="#f3f2f6"/><rect x="51" y="0" width="3" height="3" fill="#d2d2d6"/><rect x="54" y="0" width="3" height="3" fill="#dbe4ea"/><rect x="57" y="0" width="3" height="3" fill="#d2cfd1"/><rect x="60" y="0" width="3" height="3" fill="#e9e9e9"/><rect x="63" y="0" width="3" height="3" fill="#cecfd0"/><rect x="66" y="0" width="3" height="3" fill="#e0e8e5"/><rect x="75" y="0" width="3" height="3" fill="#ddd9df"/><rect x="78" y="0" width="3" height="3" fill="#fdfaf5"/><rect x="81" y="0" width="3" height="3" fill="#dededf"/><rect x="0" y="3" width="3" height="3" fill="#e6e5e1"/><rect x="3" y="3" width="3" height="3" fill="#eaeceb"/><rect x="6" y="3" width="3" height="3" fill="#f1efec"/><rect x="9" y="3" width="3" height="3" fill="#f9faf6"/><rect x="12" y="3" width="3" height="3" fill="#d7d5e1"/><rect x="15" y="3" width="3" height="3" fill="#f0f0f1"/><rect x="18" y="3" width="3" height="3" fill="#d1d3d4"/><rect x="27" y="3" width="3" height="3" fill="#e4e7f1"/><rect x="30" y="3" width="3" height="3" fill="#e2e1e0"/><rect x="36" y="3" width="3" height="3" fill="#e2dde7"/><rect x="42" y="3" width="3" height="3" fill="#e0e5ed"/><rect x="48" y="3" width="3" height="3" fill="#dcd8de"/><rect x="51" y="3" width="3" height="3" fill="#e9e7e7"/><rect x="54" y="3" width="3" height="3" fill="#ccd2d5"/><rect x="57" y="3" width="3" height="3" fill="#fefaf9"/><rect x="60" y="3" width="3" height="3" fill="#f2f6f8"/><rect x="63" y="3" width="3" height="3" fill="#e6e5e6"/><rect x="66" y="3" width="3" height="3" fill="#dad7da"/><rect x="75" y="3" width="3" height="3" fill="#cdcbd0"/><rect x="78" y="3" width="3" height="3" fill="#f0f2f1"/><rect x="81" y="3" width="3" height="3" fill="#c4cdce"/><rect x="0" y="6" width="3" height="3" fill="#d0d5d2"/><rect x="3" y="6" width="3" height="3" fill="#d4d6d4"/><rect x="6" y="6" width="3" height="3" fill="#e8ecf1"/><rect x="9" y="6" width="3" height="3" fill="#ced2cf"/><rect x="12" y="6" width="3" height="3" fill="#eaeef1"/><rect x="15" y="6" width="3" height="3" fill="#f8f4fc"/><rect x="18" y="6" width="3" height="3" fill="#dce2e4"/><rect x="27" y="6" width="3" height="3" fill="#e0e1e5"/><rect x="30" y="6" width="3" height="3" fill="#e4e7ea"/><rect x="33" y="6" width="3" height="3" fill="#d0d5d2"/><rect x="36" y="6" width="3" height="3" fill="#dfdfdb"/><rect x="39" y="6" width="3" height="3" fill="#e3eaee"/><rect x="42" y="6" width="3" height="3" fill="#fffaff"/><rect x="48" y="6" width="3" height="3" fill="#dce3ee"/><rect x="51" y="6" width="3" height="3" fill="#f3f0ec"/><rect x="54" y="6" width="3" height="3" fill="#c4cbcb"/><rect x="57" y="6" width="3" height="3" fill="#d8d3d7"/><rect x="60" y="6" width="3" height="3" fill="#d2d9df"/><rect x="63" y="6" width="3" height="3" fill="#d6d0d6"/><rect x="66" y="6" width="3" height="3" fill="#d2d4d9"/><rect x="69" y="6" width="3" height="3" fill="#f4f6f0"/><rect x="72" y="6" width="3" height="3" fill="#d7dee6"/><rect x="75" y="6" width="3" height="3" fill="#d8d4db"/><rect x="78" y="6" width="3" height="3" fill="#fdf9f5"/><rect x="81" y="6" width="3" height="3" fill="#d4d8de"/><rect x="0" y="9" width="3" height="3" fill="#e3dfe5"/><rect x="3" y="9" width="3" height="3" fill="#f2fafa"/><rect x="6" y="9" width="3" height="3" fill="#d6d6d3"/><rect x="12" y="9" width="3" height="3" fill="#dededd"/><rect x="15" y="9" width="3" height="3" fill="#d7dddd"/><rect x="27" y="9" width="3" height="3" fill="#dae2e9"/><rect x="30" y="9" width="3" height="3" fill="#fdfaf4"/><rect x="33" y="9" width="3" height="3" fill="#fffaf5"/><rect x="36" y="9" width="3" height="3" fill="#dededb"/><rect x="39" y="9" width="3" height="3" fill="#d9e1e4"/><rect x="48" y="9" width="3" height="3" fill="#e0dfe0"/><rect x="51" y="9" width="3" height="3" fill="#eeeff2"/><rect x="54" y="9" width="3" height="3" fill="#e4e4e2"/><rect x="60" y="9" width="3" height="3" fill="#c1cace"/><rect x="63" y="9" width="3" height="3" fill="#dce4ee"/><rect x="66" y="9" width="3" height="3" fill="#dde2e2"/><rect x="69" y="9" width="3" height="3" fill="#ece7ed"/><rect x="72" y="9" width="3" height="3" fill="#e5e5e7"/><rect x="75" y="9" width="3" height="3" fill="#cccace"/><rect x="78" y="9" width="3" height="3" fill="#ebedee"/><rect x="81" y="9" width="3" height="3" fill="#e1e2de"/><rect x="0" y="12" width="3" height="3" fill="#fdfafb"/><rect x="3" y="12" width="3" height="3" fill="#c9cbd8"/><rect x="6" y="12" width="3" height="3" fill="#ebf1f2"/><rect x="9" y="12" width="3" height="3" fill="#c6cecc"/><rect x="12" y="12" width="3" height="3" fill="#eff2f2"/><rect x="15" y="12" width="3" height="3" fill="#c9cdd8"/><rect x="18" y="12" width="3" height="3" fill="#e2e2e2"/><rect x="21" y="12" width="3" height="3" fill="#e9ece8"/><rect x="24" y="12" width="3" height="3" fill="#fffaff"/><rect x="27" y="12" width="3" height="3" fill="#f9f5f2"/><rect x="30" y="12" width="3" height="3" fill="#f8f6fe"/><rect x="33" y="12" width="3" height="3" fill="#d5d8e1"/><rect x="36" y="12" width="3" height="3" fill="#fefafc"/><rect x="39" y="12" width="3" height="3" fill="#ececf4"/><rect x="45" y="12" width="3" height="3" fill="#e3e1ea"/><rect x="48" y="12" width="3" height="3" fill="#eae6e3"/><rect x="51" y="12" width="3" height="3" fill="#dedfdb"/><rect x="54" y="12" width="3" height="3" fill="#f6f1ef"/><rect x="57" y="12" width="3" height="3" fill="#d0d3d4"/><rect x="60" y="12" width="3" height="3" fill="#efece9"/><rect x="63" y="12" width="3" height="3" fill="#d5d2cf"/><rect x="66" y="12" width="3" height="3" fill="#e8e4ec"/><rect x="75" y="12" width="3" height="3" fill="#e4e9e6"/><rect x="78" y="12" width="3" height="3" fill="#fbf4f8"/><rect x="81" y="12" width="3" height="3" fill="#c0c6d3"/><rect x="84" y="12" width="3" height="3" fill="#dae2e6"/></svg>
<div class="a" id="r3v" style="left:858.55px;top:532.00px;font-size:12.50px;line-height:12.50px;letter-spacing:-0.450px;transform:scaleX(1.0102);transform-origin:0 0;color:#4d5359">571,63<i class="bl"></i></div>
<div class="a" id="r3d" style="left:925.25px;top:532.00px;font-size:12.50px;line-height:12.50px;color:#4d5359">10/02/22<i class="bl"></i></div>
<div class="a" id="r3c" style="left:1033.75px;top:532.00px;font-size:12.50px;line-height:12.50px;letter-spacing:-0.214px;color:#4d5359">Banco do Brasil<i class="bl"></i></div>
<div class="a" id="r3g" style="left:1193.15px;top:532.00px;font-size:12.50px;line-height:12.50px;letter-spacing:-0.160px;color:#4d5359">Grupo Financeiro<i class="bl"></i></div>
<div class="rl" style="left:82px;top:556px;width:1246px"></div>
<div class="cb" style="left:97px;top:567px"></div>
<div class="a" id="r4f" style="left:157.85px;top:570.00px;font-size:12.50px;line-height:12.50px;letter-spacing:0.080px;color:#2a9a2a">569/11<i class="bl"></i></div>
<svg class="a" style="left:298px;top:570px" width="8" height="11" viewBox="0 0 8 11"><path d="M4.6 0.4 V10 M4.6 0.9 L1.6 3" fill="none" stroke="#4d5359" stroke-width="1.1"/></svg>
<svg class="a" style="left:468px;top:570px" width="90" height="12"><rect x="0" y="0" width="3" height="3" fill="#eaece7"/><rect x="3" y="0" width="3" height="3" fill="#dddee5"/><rect x="6" y="0" width="3" height="3" fill="#f1eeef"/><rect x="15" y="0" width="3" height="3" fill="#ecedef"/><rect x="24" y="0" width="3" height="3" fill="#ebf3ee"/><rect x="45" y="0" width="3" height="3" fill="#f1eced"/><rect x="60" y="0" width="3" height="3" fill="#e6e6ee"/><rect x="63" y="0" width="3" height="3" fill="#eef6f0"/><rect x="3" y="3" width="3" height="3" fill="#f0ecf1"/><rect x="6" y="3" width="3" height="3" fill="#f5f1f1"/><rect x="9" y="3" width="3" height="3" fill="#eaeef6"/><rect x="12" y="3" width="3" height="3" fill="#dee3e3"/><rect x="15" y="3" width="3" height="3" fill="#dedfe8"/><rect x="18" y="3" width="3" height="3" fill="#e2dedf"/><rect x="21" y="3" width="3" height="3" fill="#e8e6e8"/><rect x="24" y="3" width="3" height="3" fill="#dce0e6"/><rect x="27" y="3" width="3" height="3" fill="#dbdadf"/><rect x="30" y="3" width="3" height="3" fill="#e9ecf2"/><rect x="33" y="3" width="3" height="3" fill="#e3dee6"/><rect x="36" y="3" width="3" height="3" fill="#e6e9e5"/><rect x="42" y="3" width="3" height="3" fill="#e3e6e2"/><rect x="45" y="3" width="3" height="3" fill="#dce0e8"/><rect x="48" y="3" width="3" height="3" fill="#eef3f5"/><rect x="51" y="3" width="3" height="3" fill="#dee4e6"/><rect x="54" y="3" width="3" height="3" fill="#f6faf3"/><rect x="60" y="3" width="3" height="3" fill="#f8faf6"/><rect x="63" y="3" width="3" height="3" fill="#e1dfe7"/><rect x="66" y="3" width="3" height="3" fill="#dbe1e5"/><rect x="69" y="3" width="3" height="3" fill="#e6ebf2"/><rect x="72" y="3" width="3" height="3" fill="#e4dfdd"/><rect x="75" y="3" width="3" height="3" fill="#eeecee"/><rect x="78" y="3" width="3" height="3" fill="#e7ebe6"/><rect x="81" y="3" width="3" height="3" fill="#dee1e1"/><rect x="84" y="3" width="3" height="3" fill="#d1dbe0"/><rect x="87" y="3" width="3" height="3" fill="#e8e6e6"/><rect x="0" y="6" width="3" height="3" fill="#f9faf9"/><rect x="3" y="6" width="3" height="3" fill="#f6f5f2"/><rect x="6" y="6" width="3" height="3" fill="#edecef"/><rect x="9" y="6" width="3" height="3" fill="#f4f4ef"/><rect x="12" y="6" width="3" height="3" fill="#e3e0e6"/><rect x="15" y="6" width="3" height="3" fill="#e3e3df"/><rect x="18" y="6" width="3" height="3" fill="#dddfde"/><rect x="21" y="6" width="3" height="3" fill="#e0e3e4"/><rect x="24" y="6" width="3" height="3" fill="#e3e5ea"/><rect x="27" y="6" width="3" height="3" fill="#dde0de"/><rect x="30" y="6" width="3" height="3" fill="#fefafa"/><rect x="33" y="6" width="3" height="3" fill="#e5e7ed"/><rect x="36" y="6" width="3" height="3" fill="#e4e2e9"/><rect x="42" y="6" width="3" height="3" fill="#eaedec"/><rect x="45" y="6" width="3" height="3" fill="#dcdfdc"/><rect x="48" y="6" width="3" height="3" fill="#dfdee5"/><rect x="51" y="6" width="3" height="3" fill="#d5dee6"/><rect x="54" y="6" width="3" height="3" fill="#f2f8ff"/><rect x="57" y="6" width="3" height="3" fill="#f9faff"/><rect x="60" y="6" width="3" height="3" fill="#e8eff9"/><rect x="63" y="6" width="3" height="3" fill="#d3d9d9"/><rect x="66" y="6" width="3" height="3" fill="#e6e7ef"/><rect x="69" y="6" width="3" height="3" fill="#eae9eb"/><rect x="72" y="6" width="3" height="3" fill="#dedce7"/><rect x="75" y="6" width="3" height="3" fill="#e7ecf4"/><rect x="78" y="6" width="3" height="3" fill="#e9eff8"/><rect x="81" y="6" width="3" height="3" fill="#e6eae9"/><rect x="84" y="6" width="3" height="3" fill="#e8e3e0"/><rect x="87" y="6" width="3" height="3" fill="#ecf0f7"/><rect x="0" y="9" width="3" height="3" fill="#e4e5e6"/><rect x="3" y="9" width="3" height="3" fill="#e1e0e5"/><rect x="6" y="9" width="3" height="3" fill="#f6f5f4"/><rect x="9" y="9" width="3" height="3" fill="#d7dae3"/><rect x="12" y="9" width="3" height="3" fill="#eae3ea"/><rect x="15" y="9" width="3" height="3" fill="#ebf1ee"/><rect x="18" y="9" width="3" height="3" fill="#e4e2e4"/><rect x="21" y="9" width="3" height="3" fill="#eae5ef"/><rect x="24" y="9" width="3" height="3" fill="#dae3e1"/><rect x="27" y="9" width="3" height="3" fill="#e5e2de"/><rect x="30" y="9" width="3" height="3" fill="#e5e9e6"/><rect x="33" y="9" width="3" height="3" fill="#e2e9e8"/><rect x="36" y="9" width="3" height="3" fill="#e1e9e8"/><rect x="42" y="9" width="3" height="3" fill="#efeeea"/><rect x="45" y="9" width="3" height="3" fill="#e1e0db"/><rect x="48" y="9" width="3" height="3" fill="#e7eeed"/><rect x="51" y="9" width="3" height="3" fill="#e2e6e1"/><rect x="57" y="9" width="3" height="3" fill="#eef1f3"/><rect x="60" y="9" width="3" height="3" fill="#d5d9df"/><rect x="63" y="9" width="3" height="3" fill="#f6f6fc"/><rect x="66" y="9" width="3" height="3" fill="#d8dcdb"/><rect x="69" y="9" width="3" height="3" fill="#e6e6e9"/><rect x="72" y="9" width="3" height="3" fill="#dcdede"/><rect x="75" y="9" width="3" height="3" fill="#edf2f1"/><rect x="78" y="9" width="3" height="3" fill="#d4d9d9"/><rect x="81" y="9" width="3" height="3" fill="#eae5e4"/><rect x="84" y="9" width="3" height="3" fill="#e8e2ea"/><rect x="87" y="9" width="3" height="3" fill="#ebf3f6"/></svg>
<svg class="a" style="left:682px;top:567px" width="87" height="15"><rect x="0" y="0" width="3" height="3" fill="#f5f0ee"/><rect x="3" y="0" width="3" height="3" fill="#d2cdcd"/><rect x="6" y="0" width="3" height="3" fill="#fffaf9"/><rect x="9" y="0" width="3" height="3" fill="#c9d0dc"/><rect x="12" y="0" width="3" height="3" fill="#fbf6f2"/><rect x="15" y="0" width="3" height="3" fill="#d4dce6"/><rect x="18" y="0" width="3" height="3" fill="#ede9ef"/><rect x="24" y="0" width="3" height="3" fill="#eae9e6"/><rect x="27" y="0" width="3" height="3" fill="#cccbcd"/><rect x="30" y="0" width="3" height="3" fill="#e1e6e8"/><rect x="33" y="0" width="3" height="3" fill="#d3d5da"/><rect x="36" y="0" width="3" height="3" fill="#f6f3f5"/><rect x="39" y="0" width="3" height="3" fill="#cbcecd"/><rect x="42" y="0" width="3" height="3" fill="#d5d3d8"/><rect x="48" y="0" width="3" height="3" fill="#edebf0"/><rect x="51" y="0" width="3" height="3" fill="#d7d1d4"/><rect x="54" y="0" width="3" height="3" fill="#edf2f9"/><rect x="57" y="0" width="3" height="3" fill="#cdd5d8"/><rect x="60" y="0" width="3" height="3" fill="#f1f7f2"/><rect x="63" y="0" width="3" height="3" fill="#d7dfe9"/><rect x="66" y="0" width="3" height="3" fill="#dfe3e8"/><rect x="75" y="0" width="3" height="3" fill="#e1e6ee"/><rect x="78" y="0" width="3" height="3" fill="#fafaf8"/><rect x="81" y="0" width="3" height="3" fill="#ced7df"/><rect x="0" y="3" width="3" height="3" fill="#d4d8e3"/><rect x="3" y="3" width="3" height="3" fill="#f6f6fe"/><rect x="6" y="3" width="3" height="3" fill="#f2f2ec"/><rect x="9" y="3" width="3" height="3" fill="#fffaf3"/><rect x="12" y="3" width="3" height="3" fill="#e1dedf"/><rect x="15" y="3" width="3" height="3" fill="#e7f0eb"/><rect x="18" y="3" width="3" height="3" fill="#dadfdb"/><rect x="27" y="3" width="3" height="3" fill="#e5e7e3"/><rect x="30" y="3" width="3" height="3" fill="#e3dee0"/><rect x="36" y="3" width="3" height="3" fill="#e7e5e9"/><rect x="42" y="3" width="3" height="3" fill="#d0d9df"/><rect x="48" y="3" width="3" height="3" fill="#dad5d6"/><rect x="51" y="3" width="3" height="3" fill="#ece7e4"/><rect x="54" y="3" width="3" height="3" fill="#d3d2d9"/><rect x="57" y="3" width="3" height="3" fill="#f7f2f2"/><rect x="60" y="3" width="3" height="3" fill="#f8faf6"/><rect x="63" y="3" width="3" height="3" fill="#dfe1e0"/><rect x="66" y="3" width="3" height="3" fill="#dbddd9"/><rect x="75" y="3" width="3" height="3" fill="#c0c1c1"/><rect x="78" y="3" width="3" height="3" fill="#fcf7fb"/><rect x="81" y="3" width="3" height="3" fill="#dbd9d9"/><rect x="0" y="6" width="3" height="3" fill="#dadadb"/><rect x="3" y="6" width="3" height="3" fill="#d1d9d6"/><rect x="6" y="6" width="3" height="3" fill="#e7eaec"/><rect x="9" y="6" width="3" height="3" fill="#cbd3db"/><rect x="12" y="6" width="3" height="3" fill="#f2eef1"/><rect x="15" y="6" width="3" height="3" fill="#fffafc"/><rect x="18" y="6" width="3" height="3" fill="#dee5e1"/><rect x="27" y="6" width="3" height="3" fill="#e0e4e4"/><rect x="30" y="6" width="3" height="3" fill="#e7e3e8"/><rect x="33" y="6" width="3" height="3" fill="#d5d4db"/><rect x="36" y="6" width="3" height="3" fill="#d4dadd"/><rect x="39" y="6" width="3" height="3" fill="#e3eaec"/><rect x="42" y="6" width="3" height="3" fill="#f4f2f6"/><rect x="48" y="6" width="3" height="3" fill="#dbe0e0"/><rect x="51" y="6" width="3" height="3" fill="#efefed"/><rect x="54" y="6" width="3" height="3" fill="#d8dbe7"/><rect x="57" y="6" width="3" height="3" fill="#dee2ea"/><rect x="60" y="6" width="3" height="3" fill="#c8d0ce"/><rect x="63" y="6" width="3" height="3" fill="#eef5f2"/><rect x="66" y="6" width="3" height="3" fill="#dcdbd7"/><rect x="69" y="6" width="3" height="3" fill="#e2e7e9"/><rect x="72" y="6" width="3" height="3" fill="#e7eef8"/><rect x="75" y="6" width="3" height="3" fill="#d4dbdb"/><rect x="78" y="6" width="3" height="3" fill="#f3fafe"/><rect x="81" y="6" width="3" height="3" fill="#dcdfe6"/><rect x="0" y="9" width="3" height="3" fill="#d4d9e1"/><rect x="3" y="9" width="3" height="3" fill="#fbf6ff"/><rect x="6" y="9" width="3" height="3" fill="#d7d6de"/><rect x="12" y="9" width="3" height="3" fill="#e5e2e5"/><rect x="15" y="9" width="3" height="3" fill="#d3dce4"/><rect x="27" y="9" width="3" height="3" fill="#d9deda"/><rect x="30" y="9" width="3" height="3" fill="#f4faf9"/><rect x="33" y="9" width="3" height="3" fill="#fffafa"/><rect x="36" y="9" width="3" height="3" fill="#dad6db"/><rect x="39" y="9" width="3" height="3" fill="#d7dbe4"/><rect x="48" y="9" width="3" height="3" fill="#e3e3ed"/><rect x="51" y="9" width="3" height="3" fill="#dfe4e1"/><rect x="54" y="9" width="3" height="3" fill="#e0e2dd"/><rect x="60" y="9" width="3" height="3" fill="#d0cbd7"/><rect x="63" y="9" width="3" height="3" fill="#dee3e4"/><rect x="66" y="9" width="3" height="3" fill="#d8d5d6"/><rect x="69" y="9" width="3" height="3" fill="#e5e3ec"/><rect x="72" y="9" width="3" height="3" fill="#e5e0e1"/><rect x="75" y="9" width="3" height="3" fill="#caccd3"/><rect x="78" y="9" width="3" height="3" fill="#e3e1e2"/><rect x="81" y="9" width="3" height="3" fill="#e6e3e0"/><rect x="0" y="12" width="3" height="3" fill="#e8edee"/><rect x="3" y="12" width="3" height="3" fill="#cdd6d8"/><rect x="6" y="12" width="3" height="3" fill="#f4f0ea"/><rect x="9" y="12" width="3" height="3" fill="#d8d5e1"/><rect x="12" y="12" width="3" height="3" fill="#f3efeb"/><rect x="15" y="12" width="3" height="3" fill="#c0c8c5"/><rect x="18" y="12" width="3" height="3" fill="#e3dce4"/><rect x="21" y="12" width="3" height="3" fill="#f4eee9"/><rect x="24" y="12" width="3" height="3" fill="#f4f3ee"/><rect x="27" y="12" width="3" height="3" fill="#edf0ed"/><rect x="30" y="12" width="3" height="3" fill="#f9f8f1"/><rect x="33" y="12" width="3" height="3" fill="#cdd1db"/><rect x="36" y="12" width="3" height="3" fill="#fdf8f4"/><rect x="39" y="12" width="3" height="3" fill="#ece5e0"/><rect x="45" y="12" width="3" height="3" fill="#eee8e2"/><rect x="48" y="12" width="3" height="3" fill="#e1e3e1"/><rect x="51" y="12" width="3" height="3" fill="#d6d2cf"/><rect x="54" y="12" width="3" height="3" fill="#eef3f0"/><rect x="57" y="12" width="3" height="3" fill="#dbd8d5"/><rect x="60" y="12" width="3" height="3" fill="#f5f7f3"/><rect x="63" y="12" width="3" height="3" fill="#d5d9e1"/><rect x="66" y="12" width="3" height="3" fill="#eaedeb"/><rect x="75" y="12" width="3" height="3" fill="#eef0f3"/><rect x="78" y="12" width="3" height="3" fill="#e9f0ec"/><rect x="81" y="12" width="3" height="3" fill="#d7d5db"/><rect x="84" y="12" width="3" height="3" fill="#e1e1e3"/></svg>
<div class="a" id="r4v" style="left:858.55px;top:570.00px;font-size:12.50px;line-height:12.50px;letter-spacing:-0.450px;transform:scaleX(1.0102);transform-origin:0 0;color:#4d5359">571,67<i class="bl"></i></div>
<div class="a" id="r4d" style="left:925.25px;top:570.00px;font-size:12.50px;line-height:12.50px;color:#4d5359">10/01/22<i class="bl"></i></div>
<div class="a" id="r4c" style="left:1033.75px;top:570.00px;font-size:12.50px;line-height:12.50px;letter-spacing:-0.214px;color:#4d5359">Banco do Brasil<i class="bl"></i></div>
<div class="a" id="r4g" style="left:1193.15px;top:570.00px;font-size:12.50px;line-height:12.50px;letter-spacing:-0.160px;color:#4d5359">Grupo Financeiro<i class="bl"></i></div>
<div class="a" id="n8" style="left:79.77px;top:412.01px;font-size:25.50px;line-height:25.50px;color:#8b1111">8<i class="bl"></i></div>
<div class="a" id="n9" style="left:199.67px;top:412.51px;font-size:25.50px;line-height:25.50px;color:#8b1111">9<i class="bl"></i></div>
</div>
<svg class="a" style="left:76px;top:589px" width="28" height="27" viewBox="0 0 28 27"><g fill="none" stroke="#566c7b" stroke-width="1.5"><path d="M0.30 3.50 L0.80 3.45 L1.30 3.33 L1.80 3.16 L2.30 2.93 L2.80 2.67 L3.30 2.39 L3.80 2.10 L4.30 1.82 L4.80 1.57 L5.30 1.36 L5.80 1.21 L6.30 1.12 L6.80 1.10 L7.30 1.15 L7.80 1.27 L8.30 1.44 L8.80 1.67 L9.30 1.93 L9.80 2.21 L10.30 2.50 L10.80 2.78 L11.30 3.03 L11.80 3.24 L12.30 3.39 L12.80 3.48 L13.30 3.50 L13.80 3.45 L14.30 3.33 L14.80 3.16 L15.30 2.93 L15.80 2.67 L16.30 2.39 L16.80 2.10 L17.30 1.82 L17.80 1.57 L18.30 1.36 L18.80 1.21 L19.30 1.12 L19.80 1.10 L20.30 1.15 L20.80 1.27 L21.30 1.44 L21.80 1.67 L22.30 1.93 L22.80 2.21 L23.30 2.50 L23.80 2.78 L24.30 3.03 L24.80 3.24 L25.30 3.39 L25.80 3.48 L26.30 3.50"/><path d="M0.30 6.10 L0.80 6.05 L1.30 5.93 L1.80 5.76 L2.30 5.53 L2.80 5.27 L3.30 4.99 L3.80 4.70 L4.30 4.42 L4.80 4.17 L5.30 3.96 L5.80 3.81 L6.30 3.72 L6.80 3.70 L7.30 3.75 L7.80 3.87 L8.30 4.04 L8.80 4.27 L9.30 4.53 L9.80 4.81 L10.30 5.10 L10.80 5.38 L11.30 5.63 L11.80 5.84 L12.30 5.99 L12.80 6.08 L13.30 6.10 L13.80 6.05 L14.30 5.93 L14.80 5.76 L15.30 5.53 L15.80 5.27 L16.30 4.99 L16.80 4.70 L17.30 4.42 L17.80 4.17 L18.30 3.96 L18.80 3.81 L19.30 3.72 L19.80 3.70 L20.30 3.75 L20.80 3.87 L21.30 4.04 L21.80 4.27 L22.30 4.53 L22.80 4.81 L23.30 5.10 L23.80 5.38 L24.30 5.63 L24.80 5.84 L25.30 5.99 L25.80 6.08 L26.30 6.10"/><path d="M0.30 8.70 L0.80 8.65 L1.30 8.53 L1.80 8.36 L2.30 8.13 L2.80 7.87 L3.30 7.59 L3.80 7.30 L4.30 7.02 L4.80 6.77 L5.30 6.56 L5.80 6.41 L6.30 6.32 L6.80 6.30 L7.30 6.35 L7.80 6.47 L8.30 6.64 L8.80 6.87 L9.30 7.13 L9.80 7.41 L10.30 7.70 L10.80 7.98 L11.30 8.23 L11.80 8.44 L12.30 8.59 L12.80 8.68 L13.30 8.70 L13.80 8.65 L14.30 8.53 L14.80 8.36 L15.30 8.13 L15.80 7.87 L16.30 7.59 L16.80 7.30 L17.30 7.02 L17.80 6.77 L18.30 6.56 L18.80 6.41 L19.30 6.32 L19.80 6.30 L20.30 6.35 L20.80 6.47 L21.30 6.64 L21.80 6.87 L22.30 7.13 L22.80 7.41 L23.30 7.70 L23.80 7.98 L24.30 8.23 L24.80 8.44 L25.30 8.59 L25.80 8.68 L26.30 8.70"/><path d="M0.30 11.30 L0.80 11.25 L1.30 11.13 L1.80 10.96 L2.30 10.73 L2.80 10.47 L3.30 10.19 L3.80 9.90 L4.30 9.62 L4.80 9.37 L5.30 9.16 L5.80 9.01 L6.30 8.92 L6.80 8.90 L7.30 8.95 L7.80 9.07 L8.30 9.24 L8.80 9.47 L9.30 9.73 L9.80 10.01 L10.30 10.30 L10.80 10.58 L11.30 10.83 L11.80 11.04 L12.30 11.19 L12.80 11.28 L13.30 11.30 L13.80 11.25 L14.30 11.13 L14.80 10.96 L15.30 10.73 L15.80 10.47 L16.30 10.19 L16.80 9.90 L17.30 9.62 L17.80 9.37 L18.30 9.16 L18.80 9.01 L19.30 8.92 L19.80 8.90 L20.30 8.95 L20.80 9.07 L21.30 9.24 L21.80 9.47 L22.30 9.73 L22.80 10.01 L23.30 10.30 L23.80 10.58 L24.30 10.83 L24.80 11.04 L25.30 11.19 L25.80 11.28 L26.30 11.30"/></g><text x="13.6" y="20" text-anchor="middle" font-family="Liberation Sans" font-weight="bold" font-size="6.8" letter-spacing="1.3" fill="#4d6473">EASY</text><text x="13.6" y="25.6" text-anchor="middle" font-family="Liberation Sans" font-weight="bold" font-size="4.8" letter-spacing="0.7" fill="#4d6473">MARINE</text></svg>
<div class="a" id="ft1" style="left:233.72px;top:598.90px;font-size:9.60px;line-height:9.60px;letter-spacing:-0.140px;color:#6b7075">Copyright ©<i class="bl"></i></div>
<div class="a" id="ft2" style="left:285.82px;top:598.90px;font-size:9.60px;line-height:9.60px;letter-spacing:-0.450px;transform:scaleX(0.9524);transform-origin:0 0;color:#111">EASYMARINE<i class="bl"></i></div>
<div class="a" id="ft3" style="left:344.22px;top:598.90px;font-size:9.60px;line-height:9.60px;letter-spacing:-0.067px;color:#6b7075">2021<i class="bl"></i></div>
</body></html>
